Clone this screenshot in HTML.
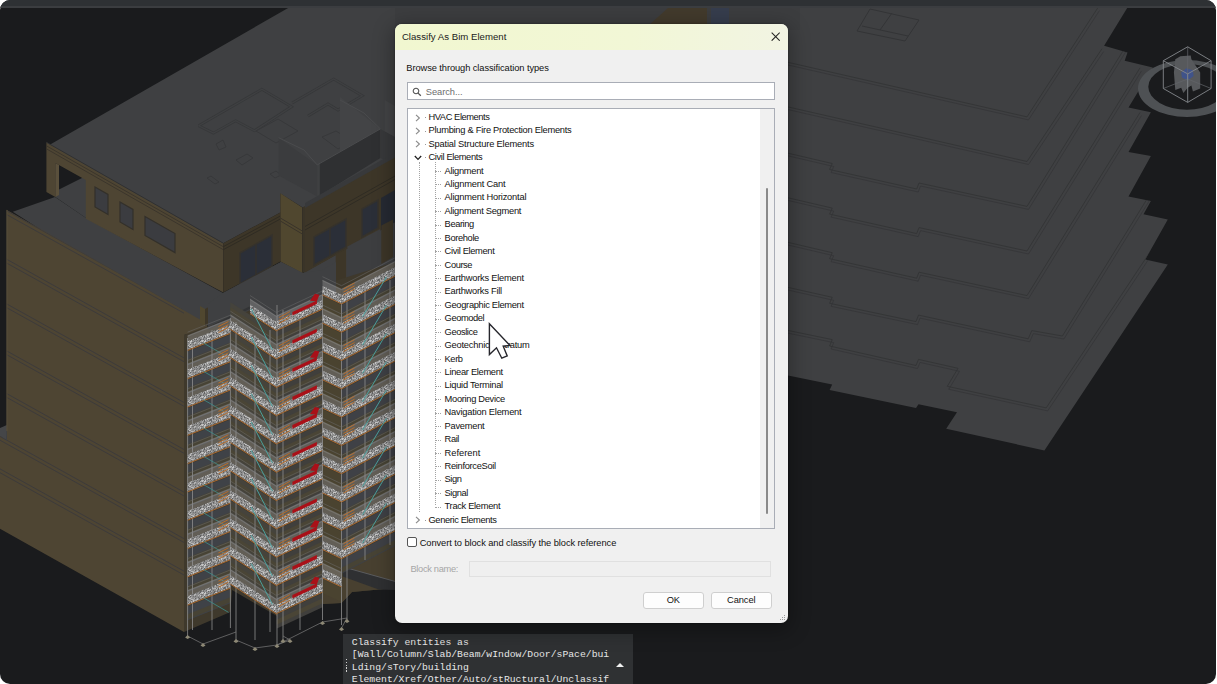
<!DOCTYPE html>
<html lang="en"><head><meta charset="utf-8"><title>Classify As Bim Element</title>
<style>
html,body{margin:0;padding:0;background:#fff;}
body{width:1217px;height:684px;overflow:hidden;position:relative;font-family:"Liberation Sans",sans-serif;}
.frame{position:absolute;left:0;top:0;width:1216px;height:684px;border-radius:10px;overflow:hidden;background:#1a1b1d;}
.topbar{position:absolute;left:0;top:0;width:100%;height:6px;background:#2e3134;border-bottom:2px solid #3b3d40;z-index:2}
svg.scene{position:absolute;left:0;top:0}
.dlg{position:absolute;left:394.5px;top:24px;width:393.5px;height:598.8px;background:#f0f0f0;border-radius:7px;overflow:hidden;box-shadow:0 5px 20px 3px rgba(0,0,0,.30),0 0 2px rgba(0,0,0,.45);color:#111;}
.ttl{position:absolute;left:0;top:0;right:0;height:25.6px;background:linear-gradient(90deg,#f1f7d0 0%,#f2f7d6 60%,#f2f4e3 100%);}
.ttl span{position:absolute;left:7.4px;top:7px;font-size:9.6px;line-height:12px;letter-spacing:0.02px;color:#1a1a1a;white-space:nowrap}
.close{position:absolute;left:376.4px;top:7.7px}
.lbl{position:absolute;left:11.8px;top:38px;font-size:9.3px;line-height:12px;white-space:nowrap;letter-spacing:-0.08px}
.search{position:absolute;left:12.8px;top:58.2px;width:367.8px;height:17.5px;background:#fff;border:1px solid #a9adb6;box-sizing:border-box}
.search span{position:absolute;left:17.5px;top:2.6px;font-size:9.3px;line-height:12px;color:#6d6d6d;letter-spacing:-0.05px}
.search svg{position:absolute;left:4px;top:3.4px}
.tree{position:absolute;left:12.8px;top:84.3px;width:368px;height:420.7px;background:#fff;border:1px solid #a9adb6;box-sizing:border-box;overflow:hidden}
.sbar{position:absolute;right:0.5px;top:0;width:13.5px;height:100%;background:#f0f0f0}
.thumb{position:absolute;left:5.9px;top:78.3px;width:1.6px;height:326px;background:#8a8a8a;border-radius:1px}
.row{position:absolute;left:0;height:13.4px;width:340px;font-size:9.3px;line-height:13.4px;white-space:nowrap;color:#111}
.cv{position:absolute;left:6.1px;top:0;width:8px;height:13.4px}
.cv svg{position:absolute;left:1px;top:3.4px}
.cv.ex svg{left:-0.5px;top:4.6px}
.dot{position:absolute;left:17px;top:7px;width:1px;height:1px;background:#9a9a9a}
.t0{position:absolute;left:20.2px;top:0.7px;letter-spacing:-0.2px}
.t1{position:absolute;left:36.3px;top:0.7px;letter-spacing:-0.13px}
.hl{position:absolute;left:27.2px;top:7px;width:6px;height:0;border-top:1px dotted #a4a4a4}
.v1{position:absolute;left:10.8px;top:52.4px;width:0;height:350px;border-left:1px dotted #a4a4a4}
.v2{position:absolute;left:26.8px;top:52.4px;width:0;height:343.5px;border-left:1px dotted #a4a4a4}
.chk{position:absolute;left:12.2px;top:513.2px;width:10.2px;height:10.2px;border:1px solid #555;border-radius:2px;box-sizing:border-box;background:#fff}
.chkl{position:absolute;left:25.2px;top:513.1px;font-size:9.3px;line-height:12px;white-space:nowrap;letter-spacing:-0.07px}
.bn{position:absolute;left:16px;top:538.6px;font-size:9.3px;line-height:12px;color:#a6a6a6;white-space:nowrap;letter-spacing:-0.33px}
.bni{position:absolute;left:74.5px;top:537px;width:302px;height:15.5px;border:1px solid #e0e0e0;box-sizing:border-box;background:#efefef}
.btn{position:absolute;top:567.5px;height:17px;width:60.5px;border:1px solid #cfcfcf;border-radius:3px;background:#fdfdfd;box-sizing:border-box;font-size:9.3px;line-height:15.5px;text-align:center;letter-spacing:-0.1px}
.ok{left:248.5px} .cancel{left:316.5px}
.grip{position:absolute;right:2px;bottom:1.6px}
.con{position:absolute;left:342.6px;top:634px;width:290px;height:50px;background:#2f3133;color:#e6e6e6;font-family:"Liberation Mono",monospace;font-size:9.76px;line-height:12.6px;white-space:pre;overflow:hidden}
.con .tx{position:absolute;left:9.2px;top:2.6px}
.con .tri{position:absolute;left:273.2px;top:28.8px}
.con .gr{position:absolute;left:3.2px;top:25px;width:1.4px;height:12.5px;background:repeating-linear-gradient(#d0d0d0 0 1.4px,transparent 1.4px 2.8px)}
.cur{position:absolute;left:0;top:0;z-index:9}
</style></head><body>
<div class="frame">
<svg class="scene" width="1216" height="684" viewBox="0 0 1216 684">
<defs>
<filter id="nz" x="0" y="0" width="100%" height="100%"><feTurbulence type="fractalNoise" baseFrequency="0.9" numOctaves="2" seed="3"/><feColorMatrix type="matrix" values="0 0 0 0 0.62  0 0 0 0 0.62  0 0 0 0 0.62  1.6 1.6 0 0 -1.1"/></filter>
<pattern id="noise" width="14" height="14" patternUnits="userSpaceOnUse"><rect width="14" height="14" fill="#8f8f8f"/><rect x="0" y="0" width="1" height="1" fill="#6c6c6c"/><rect x="1" y="0" width="1" height="1" fill="#6c6c6c"/><rect x="2" y="0" width="1" height="1" fill="#adadad"/><rect x="3" y="0" width="1" height="1" fill="#adadad"/><rect x="4" y="0" width="1" height="1" fill="#adadad"/><rect x="5" y="0" width="1" height="1" fill="#b8b8b8"/><rect x="6" y="0" width="1" height="1" fill="#6c6c6c"/><rect x="7" y="0" width="1" height="1" fill="#adadad"/><rect x="8" y="0" width="1" height="1" fill="#626262"/><rect x="9" y="0" width="1" height="1" fill="#b8b8b8"/><rect x="12" y="0" width="1" height="1" fill="#adadad"/><rect x="13" y="0" width="1" height="1" fill="#6c6c6c"/><rect x="0" y="1" width="1" height="1" fill="#b8b8b8"/><rect x="1" y="1" width="1" height="1" fill="#6c6c6c"/><rect x="6" y="1" width="1" height="1" fill="#adadad"/><rect x="8" y="1" width="1" height="1" fill="#626262"/><rect x="3" y="2" width="1" height="1" fill="#6c6c6c"/><rect x="6" y="2" width="1" height="1" fill="#adadad"/><rect x="7" y="2" width="1" height="1" fill="#767676"/><rect x="10" y="2" width="1" height="1" fill="#6c6c6c"/><rect x="11" y="2" width="1" height="1" fill="#c6c6c6"/><rect x="12" y="2" width="1" height="1" fill="#c6c6c6"/><rect x="13" y="2" width="1" height="1" fill="#c6c6c6"/><rect x="0" y="3" width="1" height="1" fill="#626262"/><rect x="1" y="3" width="1" height="1" fill="#adadad"/><rect x="4" y="3" width="1" height="1" fill="#626262"/><rect x="5" y="3" width="1" height="1" fill="#767676"/><rect x="7" y="3" width="1" height="1" fill="#6c6c6c"/><rect x="11" y="3" width="1" height="1" fill="#adadad"/><rect x="12" y="3" width="1" height="1" fill="#626262"/><rect x="1" y="4" width="1" height="1" fill="#767676"/><rect x="3" y="4" width="1" height="1" fill="#767676"/><rect x="4" y="4" width="1" height="1" fill="#626262"/><rect x="5" y="4" width="1" height="1" fill="#b8b8b8"/><rect x="6" y="4" width="1" height="1" fill="#c6c6c6"/><rect x="7" y="4" width="1" height="1" fill="#b8b8b8"/><rect x="8" y="4" width="1" height="1" fill="#767676"/><rect x="9" y="4" width="1" height="1" fill="#c6c6c6"/><rect x="10" y="4" width="1" height="1" fill="#767676"/><rect x="0" y="5" width="1" height="1" fill="#767676"/><rect x="3" y="5" width="1" height="1" fill="#6c6c6c"/><rect x="4" y="5" width="1" height="1" fill="#b8b8b8"/><rect x="5" y="5" width="1" height="1" fill="#adadad"/><rect x="6" y="5" width="1" height="1" fill="#c6c6c6"/><rect x="8" y="5" width="1" height="1" fill="#c6c6c6"/><rect x="9" y="5" width="1" height="1" fill="#c6c6c6"/><rect x="12" y="5" width="1" height="1" fill="#6c6c6c"/><rect x="3" y="6" width="1" height="1" fill="#adadad"/><rect x="5" y="6" width="1" height="1" fill="#767676"/><rect x="6" y="6" width="1" height="1" fill="#767676"/><rect x="8" y="6" width="1" height="1" fill="#b8b8b8"/><rect x="10" y="6" width="1" height="1" fill="#6c6c6c"/><rect x="11" y="6" width="1" height="1" fill="#6c6c6c"/><rect x="12" y="6" width="1" height="1" fill="#adadad"/><rect x="13" y="6" width="1" height="1" fill="#b8b8b8"/><rect x="2" y="7" width="1" height="1" fill="#b8b8b8"/><rect x="4" y="7" width="1" height="1" fill="#c6c6c6"/><rect x="8" y="7" width="1" height="1" fill="#c6c6c6"/><rect x="12" y="7" width="1" height="1" fill="#b8b8b8"/><rect x="4" y="8" width="1" height="1" fill="#adadad"/><rect x="5" y="8" width="1" height="1" fill="#626262"/><rect x="7" y="8" width="1" height="1" fill="#adadad"/><rect x="8" y="8" width="1" height="1" fill="#626262"/><rect x="11" y="8" width="1" height="1" fill="#767676"/><rect x="13" y="8" width="1" height="1" fill="#6c6c6c"/><rect x="2" y="9" width="1" height="1" fill="#6c6c6c"/><rect x="6" y="9" width="1" height="1" fill="#b8b8b8"/><rect x="9" y="9" width="1" height="1" fill="#adadad"/><rect x="1" y="10" width="1" height="1" fill="#adadad"/><rect x="3" y="10" width="1" height="1" fill="#626262"/><rect x="6" y="10" width="1" height="1" fill="#6c6c6c"/><rect x="7" y="10" width="1" height="1" fill="#c6c6c6"/><rect x="8" y="10" width="1" height="1" fill="#b8b8b8"/><rect x="12" y="10" width="1" height="1" fill="#adadad"/><rect x="13" y="10" width="1" height="1" fill="#626262"/><rect x="0" y="11" width="1" height="1" fill="#adadad"/><rect x="1" y="11" width="1" height="1" fill="#c6c6c6"/><rect x="5" y="11" width="1" height="1" fill="#adadad"/><rect x="6" y="11" width="1" height="1" fill="#626262"/><rect x="7" y="11" width="1" height="1" fill="#767676"/><rect x="9" y="11" width="1" height="1" fill="#b8b8b8"/><rect x="10" y="11" width="1" height="1" fill="#b8b8b8"/><rect x="11" y="11" width="1" height="1" fill="#adadad"/><rect x="0" y="12" width="1" height="1" fill="#adadad"/><rect x="3" y="12" width="1" height="1" fill="#626262"/><rect x="5" y="12" width="1" height="1" fill="#adadad"/><rect x="9" y="12" width="1" height="1" fill="#6c6c6c"/><rect x="11" y="12" width="1" height="1" fill="#c6c6c6"/><rect x="12" y="12" width="1" height="1" fill="#adadad"/><rect x="13" y="12" width="1" height="1" fill="#adadad"/><rect x="0" y="13" width="1" height="1" fill="#626262"/><rect x="1" y="13" width="1" height="1" fill="#6c6c6c"/><rect x="2" y="13" width="1" height="1" fill="#adadad"/><rect x="3" y="13" width="1" height="1" fill="#767676"/><rect x="9" y="13" width="1" height="1" fill="#b8b8b8"/><rect x="11" y="13" width="1" height="1" fill="#c6c6c6"/></pattern>
<clipPath id="slabclip"><polygon points="788.0,7.5 1127.5,7.5 1104.1,45.8 1127.5,52.4 1124.7,60.8 1152.8,67.4 1128.5,107.6 1150.9,112.2 1128.5,152.0 1150.9,156.1 1128.5,196.4 1150.9,201.0 1143.5,214.2 1167.8,219.6 1145.3,259.5 1167.8,264.6 1044.4,450.4 946.2,428.8 957.0,412.2 918.5,404.3 916.0,407.9 829.6,389.9 832.2,384.5 788.0,375.5 700.0,356.0 700.0,7.5"/></clipPath>
<clipPath id="faceclip"><polygon points="6.9,209.9 207.0,323.4 207.0,330.0 184.0,335.0 184.0,632.0 0.0,528.7 0.0,435.0 6.9,440.0"/></clipPath>
</defs>
<polygon points="788.0,7.5 1127.5,7.5 1104.1,45.8 1127.5,52.4 1124.7,60.8 1152.8,67.4 1128.5,107.6 1150.9,112.2 1128.5,152.0 1150.9,156.1 1128.5,196.4 1150.9,201.0 1143.5,214.2 1167.8,219.6 1145.3,259.5 1167.8,264.6 1044.4,450.4 946.2,428.8 957.0,412.2 918.5,404.3 916.0,407.9 829.6,389.9 832.2,384.5 788.0,375.5 700.0,356.0 700.0,7.5" fill="#3f4042" />
<polyline points="780.0,60.5 1027.0,116.9 1098.0,7.5" fill="none" stroke="#333436" stroke-width="0.9"  clip-path="url(#slabclip)"/>
<polyline points="781.5,63.5 1028.5,119.9 1099.5,10.5" fill="none" stroke="#333436" stroke-width="0.7"  clip-path="url(#slabclip)"/>
<polyline points="780.0,105.1 1027.0,161.5 1102.0,48.7" fill="none" stroke="#333436" stroke-width="0.9"  clip-path="url(#slabclip)"/>
<polyline points="781.5,108.1 1028.5,164.5 1103.5,51.7" fill="none" stroke="#333436" stroke-width="0.7"  clip-path="url(#slabclip)"/>
<polyline points="780.0,151.3 832.2,163.5 829.6,169.5 916.7,189.0 919.0,183.0 1027.0,206.4 1140.0,23.3" fill="none" stroke="#333436" stroke-width="0.9"  clip-path="url(#slabclip)"/>
<polyline points="781.5,154.3 833.7,166.5 831.1,172.5 918.2,192.0 920.5,186.0 1028.5,209.4 1141.5,26.3" fill="none" stroke="#333436" stroke-width="0.7"  clip-path="url(#slabclip)"/>
<polyline points="780.0,195.9 832.2,208.1 829.6,214.1 916.7,233.6 919.0,227.6 1027.0,251.0 1140.0,67.9" fill="none" stroke="#333436" stroke-width="0.9"  clip-path="url(#slabclip)"/>
<polyline points="781.5,198.9 833.7,211.1 831.1,217.1 918.2,236.6 920.5,230.6 1028.5,254.0 1141.5,70.9" fill="none" stroke="#333436" stroke-width="0.7"  clip-path="url(#slabclip)"/>
<polyline points="780.0,240.5 832.2,252.7 829.6,258.7 916.7,278.2 919.0,272.2 1027.0,295.6 1140.0,112.5" fill="none" stroke="#333436" stroke-width="0.9"  clip-path="url(#slabclip)"/>
<polyline points="781.5,243.5 833.7,255.7 831.1,261.7 918.2,281.2 920.5,275.2 1028.5,298.6 1141.5,115.5" fill="none" stroke="#333436" stroke-width="0.7"  clip-path="url(#slabclip)"/>
<polyline points="780.0,285.6 832.2,297.3 829.6,303.3 916.0,321.6 918.5,315.1 1028.2,338.8 1031.8,330.6 1062.4,336.0 1160.0,178.0" fill="none" stroke="#333436" stroke-width="0.9"  clip-path="url(#slabclip)"/>
<polyline points="781.5,288.6 833.7,300.3 831.1,306.3 917.5,324.6 920.0,318.1 1029.7,341.8 1033.3,333.6 1063.9,339.0 1161.5,181.0" fill="none" stroke="#333436" stroke-width="0.7"  clip-path="url(#slabclip)"/>
<polyline points="780.0,328.8 832.2,339.6 829.6,346.0 916.0,365.5 918.5,359.4 958.0,368.3 947.3,386.3 1046.2,407.9 1160.0,237.0" fill="none" stroke="#333436" stroke-width="0.9"  clip-path="url(#slabclip)"/>
<polyline points="781.5,331.8 833.7,342.6 831.1,349.0 917.5,368.5 920.0,362.4 959.5,371.3 948.8,389.3 1047.7,410.9 1161.5,240.0" fill="none" stroke="#333436" stroke-width="0.7"  clip-path="url(#slabclip)"/>
<polyline points="857.0,31.0 870.0,9.0 919.0,20.0 905.0,41.0 857.0,31.0" fill="none" stroke="#333436" stroke-width="1" />
<polyline points="862.0,26.0 908.0,36.0" fill="none" stroke="#333436" stroke-width="1" />
<polyline points="880.0,30.0 892.0,13.0" fill="none" stroke="#333436" stroke-width="1" />
<polygon points="289.0,7.5 48.0,145.7 223.3,243.2 280.4,212.5 280.4,193.5 303.5,208.0 420.0,143.0 420.0,7.5" fill="#3f4042" />
<polygon points="395.0,7.5 800.0,7.5 800.0,30.0 395.0,30.0" fill="#3c3d3f" />
<polygon points="648.0,26.0 668.0,8.0 707.0,8.0 707.0,26.0" fill="#423a2c" />
<polygon points="711.0,8.0 729.0,8.0 729.0,26.0 711.0,26.0" fill="#363d4d" />
<polyline points="198.6,125.7 261.9,89.3 291.5,106.8 254.5,130.7 235.6,120.8 213.4,133.1 198.6,125.7" fill="none" stroke="#37383a" stroke-width="2.8" />
<polyline points="198.6,125.7 261.9,89.3 291.5,106.8 254.5,130.7 235.6,120.8 213.4,133.1 198.6,125.7" fill="none" stroke="#3f4042" stroke-width="1.2" />
<polyline points="292.2,103.0 333.7,79.0 362.3,95.7 338.0,110.0 328.0,104.0 308.0,116.0" fill="none" stroke="#37383a" stroke-width="2.8" />
<polyline points="292.2,103.0 333.7,79.0 362.3,95.7 338.0,110.0 328.0,104.0 308.0,116.0" fill="none" stroke="#3f4042" stroke-width="1.2" />
<polyline points="256.0,131.0 278.0,119.0 298.0,131.0 276.0,143.0 256.0,131.0" fill="none" stroke="#37383a" stroke-width="1" />
<polyline points="322.0,137.0 336.0,131.0 352.0,141.0 338.0,149.0 322.0,137.0" fill="none" stroke="#37383a" stroke-width="1" />
<polyline points="216.0,144.0 223.0,140.0 226.0,147.0 219.0,150.0 216.0,144.0" fill="none" stroke="#37383a" stroke-width="1" />
<polyline points="236.0,160.0 247.0,154.0 253.0,158.0 242.0,165.0 236.0,160.0" fill="none" stroke="#37383a" stroke-width="1" />
<polyline points="207.0,178.0 211.0,176.0 219.0,182.0 215.0,184.0 207.0,178.0" fill="none" stroke="#37383a" stroke-width="1" />
<polyline points="270.0,174.0 276.0,171.0 281.0,175.0 275.0,178.0 270.0,174.0" fill="none" stroke="#37383a" stroke-width="1" />
<polygon points="340.0,97.0 380.4,128.9 340.0,151.8" fill="#434446" />
<polygon points="384.7,100.0 395.0,106.0 395.0,140.0 384.7,132.0" fill="#444547" />
<polygon points="278.6,137.7 317.2,164.9 317.2,196.5 278.6,175.4" fill="#3b3c3e" />
<polygon points="319.8,163.2 380.4,128.9 380.4,157.9 319.8,195.6" fill="#2f3032" />
<polygon points="380.4,128.9 395.0,137.0 395.0,165.0 380.4,157.9" fill="#38393b" />
<polyline points="278.6,137.7 304.0,150.0 317.2,164.9 380.4,128.9 364.0,113.0 340.0,100.0" fill="none" stroke="#4a4b4d" stroke-width="1" />
<polygon points="12.8,211.8 55.0,197.0 86.0,218.0 223.0,293.0 281.0,262.0 303.0,273.0 395.0,222.0 395.0,300.0 330.0,300.0 210.0,326.0 183.0,321.0" fill="#3f4042" />
<polygon points="55.3,163.0 86.0,181.0 86.0,205.0 55.3,197.0" fill="#1a1b1d" />
<polygon points="58.0,190.0 86.0,176.0 86.0,218.0 55.3,197.0" fill="#3f4042" />
<polygon points="46.4,142.3 223.3,243.2 223.3,292.5 85.8,218.8 85.8,180.0 55.3,163.0 55.3,197.0 46.4,192.0" fill="#4e4533" />
<polygon points="55.3,163.0 59.0,165.0 59.0,195.0 55.3,197.0" fill="#5a503c" />
<polyline points="46.4,145.8 223.3,246.7" fill="none" stroke="#39332a" stroke-width="0.9" />
<polyline points="46.4,148.8 223.3,249.7" fill="none" stroke="#39332a" stroke-width="0.9" />
<polyline points="46.4,142.3 223.3,243.2" fill="none" stroke="#2f3032" stroke-width="1" />
<polygon points="95.0,187.0 108.0,194.4 108.0,214.4 95.0,207.0" fill="#3b3c40" stroke="#33302a" stroke-width="1.2"/>
<polygon points="120.0,202.0 133.0,209.4 133.0,229.4 120.0,222.0" fill="#3b3c40" stroke="#33302a" stroke-width="1.2"/>
<polygon points="145.0,216.5 175.0,233.6 175.0,252.6 145.0,235.5" fill="#3b3c40" stroke="#33302a" stroke-width="1.2"/>
<polygon points="223.3,243.2 280.4,212.5 280.4,261.6 223.3,292.5" fill="#3d3628" />
<polyline points="223.3,246.7 280.4,216.0" fill="none" stroke="#2e2a22" stroke-width="0.9" />
<polyline points="223.3,249.7 280.4,219.0" fill="none" stroke="#2e2a22" stroke-width="0.9" />
<polygon points="240.0,253.0 272.0,235.0 272.0,266.0 240.0,284.0" fill="#2b2f38" stroke="#35322c" stroke-width="1.5"/>
<polyline points="256.0,244.0 256.0,275.0" fill="none" stroke="#35322c" stroke-width="1.5" />
<polygon points="280.4,193.2 302.3,207.5 302.3,273.0 280.4,261.6" fill="#50472f" />
<polyline points="280.4,218.0 302.3,231.0" fill="none" stroke="#39332a" stroke-width="1" />
<polyline points="280.4,221.0 302.3,234.0" fill="none" stroke="#39332a" stroke-width="1" />
<polygon points="302.3,207.5 305.0,206.0 305.0,272.0 302.3,273.0" fill="#3a3428" />
<polygon points="305.0,207.0 395.0,156.5 395.0,222.0 305.0,272.5" fill="#3d3628" />
<polyline points="305.0,226.5 395.0,176.0" fill="none" stroke="#2e2a22" stroke-width="0.9" />
<polyline points="305.0,230.0 395.0,179.5" fill="none" stroke="#2e2a22" stroke-width="0.9" />
<polygon points="305.0,203.0 395.0,152.5 395.0,157.5 305.0,208.0" fill="#38393b" />
<polygon points="314.0,237.0 346.0,219.0 346.0,247.0 314.0,265.0" fill="#2b2f38" stroke="#35322c" stroke-width="1.5"/>
<polyline points="330.0,228.0 330.0,256.0" fill="none" stroke="#35322c" stroke-width="1.5" />
<polygon points="362.0,209.0 378.0,200.0 378.0,228.0 362.0,237.0" fill="#2b2f38" stroke="#35322c" stroke-width="1.5"/>
<polygon points="381.0,198.0 395.0,190.0 395.0,222.0 381.0,230.0" fill="#262a33" />
<polygon points="335.7,254.8 346.2,248.9 346.2,284.0 335.7,289.9" fill="#3d3628" />
<polygon points="381.3,225.5 393.0,219.6 393.0,257.0 381.3,264.1" fill="#3d3628" />
<polygon points="347.4,246.6 380.2,229.0 380.2,266.5 347.4,282.9" fill="#3d3e40" />
<polygon points="6.9,209.9 207.0,323.4 207.0,330.0 184.0,335.0 184.0,632.0 0.0,528.7 0.0,435.0 6.9,440.0" fill="#4e4533" />
<polygon points="0.0,428.0 6.9,425.0 6.9,441.0 0.0,436.0" fill="#454648" />
<polyline points="6.9,210.9 184.0,309.4" fill="none" stroke="#3b3a3c" stroke-width="0.9" clip-path="url(#faceclip)"/>
<polyline points="6.9,214.7 184.0,313.2" fill="none" stroke="#3b3a3c" stroke-width="0.9" clip-path="url(#faceclip)"/>
<polyline points="6.9,259.4 184.0,357.9" fill="none" stroke="#3b3a3c" stroke-width="0.9" clip-path="url(#faceclip)"/>
<polyline points="6.9,263.2 184.0,361.7" fill="none" stroke="#3b3a3c" stroke-width="0.9" clip-path="url(#faceclip)"/>
<polyline points="6.9,304.0 184.0,402.5" fill="none" stroke="#3b3a3c" stroke-width="0.9" clip-path="url(#faceclip)"/>
<polyline points="6.9,307.8 184.0,406.3" fill="none" stroke="#3b3a3c" stroke-width="0.9" clip-path="url(#faceclip)"/>
<polyline points="6.9,351.0 184.0,449.5" fill="none" stroke="#3b3a3c" stroke-width="0.9" clip-path="url(#faceclip)"/>
<polyline points="6.9,354.8 184.0,453.3" fill="none" stroke="#3b3a3c" stroke-width="0.9" clip-path="url(#faceclip)"/>
<polyline points="6.9,393.7 184.0,492.2" fill="none" stroke="#3b3a3c" stroke-width="0.9" clip-path="url(#faceclip)"/>
<polyline points="6.9,397.5 184.0,496.0" fill="none" stroke="#3b3a3c" stroke-width="0.9" clip-path="url(#faceclip)"/>
<polyline points="0.0,436.4 184.0,538.7" fill="none" stroke="#3b3a3c" stroke-width="0.9" clip-path="url(#faceclip)"/>
<polyline points="0.0,440.2 184.0,542.5" fill="none" stroke="#3b3a3c" stroke-width="0.9" clip-path="url(#faceclip)"/>
<polyline points="0.0,468.9 184.0,571.2" fill="none" stroke="#3b3a3c" stroke-width="0.9" clip-path="url(#faceclip)"/>
<polyline points="0.0,472.7 184.0,575.0" fill="none" stroke="#3b3a3c" stroke-width="0.9" clip-path="url(#faceclip)"/>
<polyline points="6.9,209.9 6.9,431.0" fill="none" stroke="#5a503c" stroke-width="1" />
<polygon points="200.0,306.0 205.0,309.0 205.0,326.0 200.0,323.0" fill="#50472f" />
<polygon points="205.0,309.0 214.0,304.0 214.0,321.0 205.0,326.0" fill="#3d3628" />
<polygon points="184.0,335.0 230.0,318.0 277.0,300.0 322.0,285.0 395.0,262.0 395.0,588.0 352.0,592.0 341.5,603.0 322.5,604.0 285.0,622.0 276.9,616.0 232.0,590.0 230.4,612.0 184.0,632.0" fill="#3f392c" />
<polygon points="208.0,327.0 250.0,306.0 277.0,322.0 322.5,301.0 336.0,298.0 336.0,262.0 322.5,270.0 303.0,273.0 281.0,262.0 223.0,293.0 208.0,304.0" fill="#3f4042" />
<polyline points="208.0,328.5 250.0,307.5" fill="none" stroke="#333436" stroke-width="2.5" />
<polygon points="323.0,560.0 395.0,540.0 395.0,588.0 352.0,592.0 341.5,603.0 323.0,604.0" fill="#484030" />
<polygon points="342.7,566.8 395.0,581.4 395.0,590.0 378.6,589.5 342.7,576.4" fill="#2f3032" />
<polyline points="342.7,566.8 395.0,581.4" fill="none" stroke="#5a5b5e" stroke-width="1" />
<polygon points="187.6,351.5 230.4,334.5 230.4,348.5 187.6,365.5" fill="#3f4247" />
<polygon points="187.6,359.5 230.4,342.5 230.4,347.5 187.6,364.5" fill="#474335" />
<polygon points="187.6,379.8 230.4,362.8 230.4,376.8 187.6,393.8" fill="#3f4247" />
<polygon points="187.6,387.8 230.4,370.8 230.4,375.8 187.6,392.8" fill="#474335" />
<polygon points="187.6,408.1 230.4,391.1 230.4,405.1 187.6,422.1" fill="#3f4247" />
<polygon points="187.6,416.1 230.4,399.1 230.4,404.1 187.6,421.1" fill="#474335" />
<polygon points="187.6,436.4 230.4,419.4 230.4,433.4 187.6,450.4" fill="#3f4247" />
<polygon points="187.6,444.4 230.4,427.4 230.4,432.4 187.6,449.4" fill="#474335" />
<polygon points="187.6,464.7 230.4,447.7 230.4,461.7 187.6,478.7" fill="#3f4247" />
<polygon points="187.6,472.7 230.4,455.7 230.4,460.7 187.6,477.7" fill="#474335" />
<polygon points="187.6,493.0 230.4,476.0 230.4,490.0 187.6,507.0" fill="#3f4247" />
<polygon points="187.6,501.0 230.4,484.0 230.4,489.0 187.6,506.0" fill="#474335" />
<polygon points="187.6,521.3 230.4,504.3 230.4,518.3 187.6,535.3" fill="#3f4247" />
<polygon points="187.6,529.3 230.4,512.3 230.4,517.3 187.6,534.3" fill="#474335" />
<polygon points="187.6,549.6 230.4,532.6 230.4,546.6 187.6,563.6" fill="#3f4247" />
<polygon points="187.6,557.6 230.4,540.6 230.4,545.6 187.6,562.6" fill="#474335" />
<polygon points="187.6,577.9 230.4,560.9 230.4,574.9 187.6,591.9" fill="#3f4247" />
<polygon points="187.6,585.9 230.4,568.9 230.4,573.9 187.6,590.9" fill="#474335" />
<polygon points="187.6,606.2 230.4,589.2 230.4,603.2 187.6,620.2" fill="#3f4247" />
<polygon points="187.6,614.2 230.4,597.2 230.4,602.2 187.6,619.2" fill="#474335" />
<polygon points="230.4,302.2 276.9,332.2 276.9,346.2 230.4,316.2" fill="#45433c" />
<polygon points="230.4,307.2 276.9,337.2 276.9,342.2 230.4,312.2" fill="#4a4536" />
<polygon points="230.4,330.5 276.9,360.5 276.9,374.5 230.4,344.5" fill="#45433c" />
<polygon points="230.4,335.5 276.9,365.5 276.9,370.5 230.4,340.5" fill="#4a4536" />
<polygon points="230.4,358.8 276.9,388.8 276.9,402.8 230.4,372.8" fill="#45433c" />
<polygon points="230.4,363.8 276.9,393.8 276.9,398.8 230.4,368.8" fill="#4a4536" />
<polygon points="230.4,387.1 276.9,417.1 276.9,431.1 230.4,401.1" fill="#45433c" />
<polygon points="230.4,392.1 276.9,422.1 276.9,427.1 230.4,397.1" fill="#4a4536" />
<polygon points="230.4,415.4 276.9,445.4 276.9,459.4 230.4,429.4" fill="#45433c" />
<polygon points="230.4,420.4 276.9,450.4 276.9,455.4 230.4,425.4" fill="#4a4536" />
<polygon points="230.4,443.7 276.9,473.7 276.9,487.7 230.4,457.7" fill="#45433c" />
<polygon points="230.4,448.7 276.9,478.7 276.9,483.7 230.4,453.7" fill="#4a4536" />
<polygon points="230.4,472.0 276.9,502.0 276.9,516.0 230.4,486.0" fill="#45433c" />
<polygon points="230.4,477.0 276.9,507.0 276.9,512.0 230.4,482.0" fill="#4a4536" />
<polygon points="230.4,500.3 276.9,530.3 276.9,544.3 230.4,514.3" fill="#45433c" />
<polygon points="230.4,505.3 276.9,535.3 276.9,540.3 230.4,510.3" fill="#4a4536" />
<polygon points="230.4,528.6 276.9,558.6 276.9,572.6 230.4,542.6" fill="#45433c" />
<polygon points="230.4,533.6 276.9,563.6 276.9,568.6 230.4,538.6" fill="#4a4536" />
<polygon points="230.4,556.9 276.9,586.9 276.9,600.9 230.4,570.9" fill="#45433c" />
<polygon points="230.4,561.9 276.9,591.9 276.9,596.9 230.4,566.9" fill="#4a4536" />
<polygon points="276.9,331.5 322.5,310.2 322.5,324.2 276.9,345.5" fill="#403f3c" />
<polygon points="276.9,336.5 322.5,315.2 322.5,320.2 276.9,341.5" fill="#4a4536" />
<polygon points="276.9,359.8 322.5,338.5 322.5,352.5 276.9,373.8" fill="#403f3c" />
<polygon points="276.9,364.8 322.5,343.5 322.5,348.5 276.9,369.8" fill="#4a4536" />
<polygon points="276.9,388.1 322.5,366.8 322.5,380.8 276.9,402.1" fill="#403f3c" />
<polygon points="276.9,393.1 322.5,371.8 322.5,376.8 276.9,398.1" fill="#4a4536" />
<polygon points="276.9,416.4 322.5,395.1 322.5,409.1 276.9,430.4" fill="#403f3c" />
<polygon points="276.9,421.4 322.5,400.1 322.5,405.1 276.9,426.4" fill="#4a4536" />
<polygon points="276.9,444.7 322.5,423.4 322.5,437.4 276.9,458.7" fill="#403f3c" />
<polygon points="276.9,449.7 322.5,428.4 322.5,433.4 276.9,454.7" fill="#4a4536" />
<polygon points="276.9,473.0 322.5,451.7 322.5,465.7 276.9,487.0" fill="#403f3c" />
<polygon points="276.9,478.0 322.5,456.7 322.5,461.7 276.9,483.0" fill="#4a4536" />
<polygon points="276.9,501.3 322.5,480.0 322.5,494.0 276.9,515.3" fill="#403f3c" />
<polygon points="276.9,506.3 322.5,485.0 322.5,490.0 276.9,511.3" fill="#4a4536" />
<polygon points="276.9,529.6 322.5,508.3 322.5,522.3 276.9,543.6" fill="#403f3c" />
<polygon points="276.9,534.6 322.5,513.3 322.5,518.3 276.9,539.6" fill="#4a4536" />
<polygon points="276.9,557.9 322.5,536.6 322.5,550.6 276.9,571.9" fill="#403f3c" />
<polygon points="276.9,562.9 322.5,541.6 322.5,546.6 276.9,567.9" fill="#4a4536" />
<polygon points="276.9,586.2 322.5,564.9 322.5,578.9 276.9,600.2" fill="#403f3c" />
<polygon points="276.9,591.2 322.5,569.9 322.5,574.9 276.9,596.2" fill="#4a4536" />
<polygon points="276.9,614.5 322.5,593.2 322.5,607.2 276.9,628.5" fill="#403f3c" />
<polygon points="276.9,619.5 322.5,598.2 322.5,603.2 276.9,624.5" fill="#4a4536" />
<polygon points="322.5,296.0 341.5,305.0 341.5,319.0 322.5,310.0" fill="#4a4330" />
<polygon points="322.5,324.3 341.5,333.3 341.5,347.3 322.5,338.3" fill="#4a4330" />
<polygon points="322.5,352.6 341.5,361.6 341.5,375.6 322.5,366.6" fill="#4a4330" />
<polygon points="322.5,380.9 341.5,389.9 341.5,403.9 322.5,394.9" fill="#4a4330" />
<polygon points="322.5,409.2 341.5,418.2 341.5,432.2 322.5,423.2" fill="#4a4330" />
<polygon points="322.5,437.5 341.5,446.5 341.5,460.5 322.5,451.5" fill="#4a4330" />
<polygon points="322.5,465.8 341.5,474.8 341.5,488.8 322.5,479.8" fill="#4a4330" />
<polygon points="322.5,494.1 341.5,503.1 341.5,517.1 322.5,508.1" fill="#4a4330" />
<polygon points="322.5,522.4 341.5,531.4 341.5,545.4 322.5,536.4" fill="#4a4330" />
<polygon points="322.5,550.7 341.5,559.7 341.5,573.7 322.5,564.7" fill="#4a4330" />
<polygon points="322.5,579.0 341.5,588.0 341.5,602.0 322.5,593.0" fill="#4a4330" />
<polygon points="341.5,305.0 395.0,277.2 395.0,291.2 341.5,319.0" fill="#3f4146" />
<polygon points="341.5,313.0 395.0,285.2 395.0,290.2 341.5,318.0" fill="#474335" />
<polygon points="341.5,333.3 395.0,305.5 395.0,319.5 341.5,347.3" fill="#3f4146" />
<polygon points="341.5,341.3 395.0,313.5 395.0,318.5 341.5,346.3" fill="#474335" />
<polygon points="341.5,361.6 395.0,333.8 395.0,347.8 341.5,375.6" fill="#3f4146" />
<polygon points="341.5,369.6 395.0,341.8 395.0,346.8 341.5,374.6" fill="#474335" />
<polygon points="341.5,389.9 395.0,362.1 395.0,376.1 341.5,403.9" fill="#3f4146" />
<polygon points="341.5,397.9 395.0,370.1 395.0,375.1 341.5,402.9" fill="#474335" />
<polygon points="341.5,418.2 395.0,390.4 395.0,404.4 341.5,432.2" fill="#3f4146" />
<polygon points="341.5,426.2 395.0,398.4 395.0,403.4 341.5,431.2" fill="#474335" />
<polygon points="341.5,446.5 395.0,418.7 395.0,432.7 341.5,460.5" fill="#3f4146" />
<polygon points="341.5,454.5 395.0,426.7 395.0,431.7 341.5,459.5" fill="#474335" />
<polygon points="341.5,474.8 395.0,447.0 395.0,461.0 341.5,488.8" fill="#3f4146" />
<polygon points="341.5,482.8 395.0,455.0 395.0,460.0 341.5,487.8" fill="#474335" />
<polygon points="341.5,503.1 395.0,475.3 395.0,489.3 341.5,517.1" fill="#3f4146" />
<polygon points="341.5,511.1 395.0,483.3 395.0,488.3 341.5,516.1" fill="#474335" />
<polygon points="341.5,531.4 395.0,503.6 395.0,517.6 341.5,545.4" fill="#3f4146" />
<polygon points="341.5,539.4 395.0,511.6 395.0,516.6 341.5,544.4" fill="#474335" />
<polygon points="341.5,559.7 395.0,531.9 395.0,545.9 341.5,573.7" fill="#3f4146" />
<polygon points="341.5,567.7 395.0,539.9 395.0,544.9 341.5,572.7" fill="#474335" />
<polyline points="187.6,338.0 187.6,636.0" fill="none" stroke="#8d8d8d" stroke-width="0.8" />
<polyline points="192.5,340.0 192.5,630.0" fill="none" stroke="#8d8d8d" stroke-width="0.8" />
<polyline points="230.4,318.0 230.4,628.0" fill="none" stroke="#8d8d8d" stroke-width="0.8" />
<polyline points="236.0,322.0 236.0,640.0" fill="none" stroke="#8d8d8d" stroke-width="0.8" />
<polyline points="277.0,305.0 277.0,645.0" fill="none" stroke="#8d8d8d" stroke-width="0.8" />
<polyline points="283.0,310.0 283.0,640.0" fill="none" stroke="#8d8d8d" stroke-width="0.8" />
<polyline points="322.5,290.0 322.5,620.0" fill="none" stroke="#8d8d8d" stroke-width="0.8" />
<polyline points="341.5,300.0 341.5,625.0" fill="none" stroke="#8d8d8d" stroke-width="0.8" />
<polyline points="347.0,300.0 347.0,620.0" fill="none" stroke="#8d8d8d" stroke-width="0.8" />
<polyline points="270.0,330.0 270.0,632.0" fill="none" stroke="#8d8d8d" stroke-width="0.8" />
<polyline points="212.0,330.0 212.0,630.0" fill="none" stroke="#8d8d8d" stroke-width="0.8" />
<polyline points="255.0,335.0 255.0,640.0" fill="none" stroke="#8d8d8d" stroke-width="0.8" />
<polyline points="300.0,310.0 300.0,630.0" fill="none" stroke="#8d8d8d" stroke-width="0.8" />
<polyline points="365.0,290.0 365.0,560.0" fill="none" stroke="#8d8d8d" stroke-width="0.8" />
<polyline points="390.0,280.0 390.0,545.0" fill="none" stroke="#8d8d8d" stroke-width="0.8" />
<polygon points="187.6,335.2 230.4,318.2 230.4,324.2 187.6,341.2" fill="#9a9a9a" fill-opacity="0.38"/>
<polygon points="187.6,341.2 230.4,324.2 230.4,332.8 187.6,349.8" fill="url(#noise)" />
<polyline points="187.6,350.4 230.4,333.4" fill="none" stroke="#a86a34" stroke-width="1.0" />
<polyline points="187.6,336.2 230.4,319.2" fill="none" stroke="#7d7d7d" stroke-width="0.6" />
<polyline points="187.6,332.2 230.4,315.2" fill="none" stroke="#6d6d6d" stroke-width="0.5" />
<polyline points="218.4,326.5 228.4,321.5" fill="none" stroke="#b46c2c" stroke-width="1.0" />
<polyline points="218.4,329.5 228.4,324.5" fill="none" stroke="#b46c2c" stroke-width="1.0" />
<polyline points="218.4,332.5 228.4,327.5" fill="none" stroke="#b46c2c" stroke-width="1.0" />
<polyline points="203.6,343.1 228.6,357.7" fill="none" stroke="#3d8f8c" stroke-width="0.8" />
<polygon points="187.6,363.5 230.4,346.5 230.4,352.5 187.6,369.5" fill="#9a9a9a" fill-opacity="0.38"/>
<polygon points="187.6,369.5 230.4,352.5 230.4,361.1 187.6,378.1" fill="url(#noise)" />
<polyline points="187.6,378.7 230.4,361.7" fill="none" stroke="#a86a34" stroke-width="1.0" />
<polyline points="187.6,364.5 230.4,347.5" fill="none" stroke="#7d7d7d" stroke-width="0.6" />
<polyline points="187.6,360.5 230.4,343.5" fill="none" stroke="#6d6d6d" stroke-width="0.5" />
<polyline points="218.4,354.8 228.4,349.8" fill="none" stroke="#b46c2c" stroke-width="1.0" />
<polyline points="218.4,357.8 228.4,352.8" fill="none" stroke="#b46c2c" stroke-width="1.0" />
<polyline points="218.4,360.8 228.4,355.8" fill="none" stroke="#b46c2c" stroke-width="1.0" />
<polyline points="203.6,371.4 228.6,386.0" fill="none" stroke="#3d8f8c" stroke-width="0.8" />
<polygon points="187.6,391.8 230.4,374.8 230.4,380.8 187.6,397.8" fill="#9a9a9a" fill-opacity="0.38"/>
<polygon points="187.6,397.8 230.4,380.8 230.4,389.4 187.6,406.4" fill="url(#noise)" />
<polyline points="187.6,407.0 230.4,390.0" fill="none" stroke="#a86a34" stroke-width="1.0" />
<polyline points="187.6,392.8 230.4,375.8" fill="none" stroke="#7d7d7d" stroke-width="0.6" />
<polyline points="187.6,388.8 230.4,371.8" fill="none" stroke="#6d6d6d" stroke-width="0.5" />
<polyline points="218.4,383.1 228.4,378.1" fill="none" stroke="#b46c2c" stroke-width="1.0" />
<polyline points="218.4,386.1 228.4,381.1" fill="none" stroke="#b46c2c" stroke-width="1.0" />
<polyline points="218.4,389.1 228.4,384.1" fill="none" stroke="#b46c2c" stroke-width="1.0" />
<polyline points="203.6,399.7 228.6,414.3" fill="none" stroke="#3d8f8c" stroke-width="0.8" />
<polygon points="187.6,420.1 230.4,403.1 230.4,409.1 187.6,426.1" fill="#9a9a9a" fill-opacity="0.38"/>
<polygon points="187.6,426.1 230.4,409.1 230.4,417.7 187.6,434.7" fill="url(#noise)" />
<polyline points="187.6,435.3 230.4,418.3" fill="none" stroke="#a86a34" stroke-width="1.0" />
<polyline points="187.6,421.1 230.4,404.1" fill="none" stroke="#7d7d7d" stroke-width="0.6" />
<polyline points="187.6,417.1 230.4,400.1" fill="none" stroke="#6d6d6d" stroke-width="0.5" />
<polyline points="218.4,411.4 228.4,406.4" fill="none" stroke="#b46c2c" stroke-width="1.0" />
<polyline points="218.4,414.4 228.4,409.4" fill="none" stroke="#b46c2c" stroke-width="1.0" />
<polyline points="218.4,417.4 228.4,412.4" fill="none" stroke="#b46c2c" stroke-width="1.0" />
<polyline points="203.6,428.0 228.6,442.6" fill="none" stroke="#3d8f8c" stroke-width="0.8" />
<polygon points="187.6,448.4 230.4,431.4 230.4,437.4 187.6,454.4" fill="#9a9a9a" fill-opacity="0.38"/>
<polygon points="187.6,454.4 230.4,437.4 230.4,446.0 187.6,463.0" fill="url(#noise)" />
<polyline points="187.6,463.6 230.4,446.6" fill="none" stroke="#a86a34" stroke-width="1.0" />
<polyline points="187.6,449.4 230.4,432.4" fill="none" stroke="#7d7d7d" stroke-width="0.6" />
<polyline points="187.6,445.4 230.4,428.4" fill="none" stroke="#6d6d6d" stroke-width="0.5" />
<polyline points="218.4,439.7 228.4,434.7" fill="none" stroke="#b46c2c" stroke-width="1.0" />
<polyline points="218.4,442.7 228.4,437.7" fill="none" stroke="#b46c2c" stroke-width="1.0" />
<polyline points="218.4,445.7 228.4,440.7" fill="none" stroke="#b46c2c" stroke-width="1.0" />
<polyline points="203.6,456.3 228.6,470.9" fill="none" stroke="#3d8f8c" stroke-width="0.8" />
<polygon points="187.6,476.7 230.4,459.7 230.4,465.7 187.6,482.7" fill="#9a9a9a" fill-opacity="0.38"/>
<polygon points="187.6,482.7 230.4,465.7 230.4,474.3 187.6,491.3" fill="url(#noise)" />
<polyline points="187.6,491.9 230.4,474.9" fill="none" stroke="#a86a34" stroke-width="1.0" />
<polyline points="187.6,477.7 230.4,460.7" fill="none" stroke="#7d7d7d" stroke-width="0.6" />
<polyline points="187.6,473.7 230.4,456.7" fill="none" stroke="#6d6d6d" stroke-width="0.5" />
<polyline points="218.4,468.0 228.4,463.0" fill="none" stroke="#b46c2c" stroke-width="1.0" />
<polyline points="218.4,471.0 228.4,466.0" fill="none" stroke="#b46c2c" stroke-width="1.0" />
<polyline points="218.4,474.0 228.4,469.0" fill="none" stroke="#b46c2c" stroke-width="1.0" />
<polyline points="203.6,484.6 228.6,499.2" fill="none" stroke="#3d8f8c" stroke-width="0.8" />
<polygon points="187.6,505.0 230.4,488.0 230.4,494.0 187.6,511.0" fill="#9a9a9a" fill-opacity="0.38"/>
<polygon points="187.6,511.0 230.4,494.0 230.4,502.6 187.6,519.6" fill="url(#noise)" />
<polyline points="187.6,520.2 230.4,503.2" fill="none" stroke="#a86a34" stroke-width="1.0" />
<polyline points="187.6,506.0 230.4,489.0" fill="none" stroke="#7d7d7d" stroke-width="0.6" />
<polyline points="187.6,502.0 230.4,485.0" fill="none" stroke="#6d6d6d" stroke-width="0.5" />
<polyline points="218.4,496.3 228.4,491.3" fill="none" stroke="#b46c2c" stroke-width="1.0" />
<polyline points="218.4,499.3 228.4,494.3" fill="none" stroke="#b46c2c" stroke-width="1.0" />
<polyline points="218.4,502.3 228.4,497.3" fill="none" stroke="#b46c2c" stroke-width="1.0" />
<polyline points="203.6,512.9 228.6,527.5" fill="none" stroke="#3d8f8c" stroke-width="0.8" />
<polygon points="187.6,533.3 230.4,516.3 230.4,522.3 187.6,539.3" fill="#9a9a9a" fill-opacity="0.38"/>
<polygon points="187.6,539.3 230.4,522.3 230.4,530.9 187.6,547.9" fill="url(#noise)" />
<polyline points="187.6,548.5 230.4,531.5" fill="none" stroke="#a86a34" stroke-width="1.0" />
<polyline points="187.6,534.3 230.4,517.3" fill="none" stroke="#7d7d7d" stroke-width="0.6" />
<polyline points="187.6,530.3 230.4,513.3" fill="none" stroke="#6d6d6d" stroke-width="0.5" />
<polyline points="218.4,524.6 228.4,519.6" fill="none" stroke="#b46c2c" stroke-width="1.0" />
<polyline points="218.4,527.6 228.4,522.6" fill="none" stroke="#b46c2c" stroke-width="1.0" />
<polyline points="218.4,530.6 228.4,525.6" fill="none" stroke="#b46c2c" stroke-width="1.0" />
<polyline points="203.6,541.2 228.6,555.8" fill="none" stroke="#3d8f8c" stroke-width="0.8" />
<polygon points="187.6,561.6 230.4,544.6 230.4,550.6 187.6,567.6" fill="#9a9a9a" fill-opacity="0.38"/>
<polygon points="187.6,567.6 230.4,550.6 230.4,559.2 187.6,576.2" fill="url(#noise)" />
<polyline points="187.6,576.8 230.4,559.8" fill="none" stroke="#a86a34" stroke-width="1.0" />
<polyline points="187.6,562.6 230.4,545.6" fill="none" stroke="#7d7d7d" stroke-width="0.6" />
<polyline points="187.6,558.6 230.4,541.6" fill="none" stroke="#6d6d6d" stroke-width="0.5" />
<polyline points="218.4,552.9 228.4,547.9" fill="none" stroke="#b46c2c" stroke-width="1.0" />
<polyline points="218.4,555.9 228.4,550.9" fill="none" stroke="#b46c2c" stroke-width="1.0" />
<polyline points="218.4,558.9 228.4,553.9" fill="none" stroke="#b46c2c" stroke-width="1.0" />
<polyline points="203.6,569.5 228.6,584.1" fill="none" stroke="#3d8f8c" stroke-width="0.8" />
<polygon points="187.6,589.9 230.4,572.9 230.4,578.9 187.6,595.9" fill="#9a9a9a" fill-opacity="0.38"/>
<polygon points="187.6,595.9 230.4,578.9 230.4,587.5 187.6,604.5" fill="url(#noise)" />
<polyline points="187.6,605.1 230.4,588.1" fill="none" stroke="#a86a34" stroke-width="1.0" />
<polyline points="187.6,590.9 230.4,573.9" fill="none" stroke="#7d7d7d" stroke-width="0.6" />
<polyline points="187.6,586.9 230.4,569.9" fill="none" stroke="#6d6d6d" stroke-width="0.5" />
<polyline points="218.4,581.2 228.4,576.2" fill="none" stroke="#b46c2c" stroke-width="1.0" />
<polyline points="218.4,584.2 228.4,579.2" fill="none" stroke="#b46c2c" stroke-width="1.0" />
<polyline points="218.4,587.2 228.4,582.2" fill="none" stroke="#b46c2c" stroke-width="1.0" />
<polyline points="203.6,597.8 228.6,612.4" fill="none" stroke="#3d8f8c" stroke-width="0.8" />
<polygon points="250.0,298.5 276.9,315.9 276.9,321.9 250.0,304.5" fill="#9a9a9a" fill-opacity="0.38"/>
<polygon points="250.0,304.5 276.9,321.9 276.9,330.5 250.0,313.1" fill="url(#noise)" />
<polyline points="250.0,313.7 276.9,331.1" fill="none" stroke="#a86a34" stroke-width="1.0" />
<polyline points="250.0,299.5 276.9,316.9" fill="none" stroke="#7d7d7d" stroke-width="0.6" />
<polyline points="250.0,295.5 276.9,312.9" fill="none" stroke="#6d6d6d" stroke-width="0.5" />
<polygon points="230.4,314.2 276.9,344.2 276.9,350.2 230.4,320.2" fill="#9a9a9a" fill-opacity="0.38"/>
<polygon points="230.4,320.2 276.9,350.2 276.9,358.8 230.4,328.8" fill="url(#noise)" />
<polyline points="230.4,329.4 276.9,359.4" fill="none" stroke="#a86a34" stroke-width="1.0" />
<polyline points="230.4,315.2 276.9,345.2" fill="none" stroke="#7d7d7d" stroke-width="0.6" />
<polyline points="230.4,311.2 276.9,341.2" fill="none" stroke="#6d6d6d" stroke-width="0.5" />
<polyline points="251.2,308.8 272.4,349.7" fill="none" stroke="#4aa9a6" stroke-width="0.9" />
<polygon points="230.4,342.5 276.9,372.5 276.9,378.5 230.4,348.5" fill="#9a9a9a" fill-opacity="0.38"/>
<polygon points="230.4,348.5 276.9,378.5 276.9,387.1 230.4,357.1" fill="url(#noise)" />
<polyline points="230.4,357.7 276.9,387.7" fill="none" stroke="#a86a34" stroke-width="1.0" />
<polyline points="230.4,343.5 276.9,373.5" fill="none" stroke="#7d7d7d" stroke-width="0.6" />
<polyline points="230.4,339.5 276.9,369.5" fill="none" stroke="#6d6d6d" stroke-width="0.5" />
<polyline points="251.2,337.1 272.4,378.0" fill="none" stroke="#4aa9a6" stroke-width="0.9" />
<polygon points="230.4,370.8 276.9,400.8 276.9,406.8 230.4,376.8" fill="#9a9a9a" fill-opacity="0.38"/>
<polygon points="230.4,376.8 276.9,406.8 276.9,415.4 230.4,385.4" fill="url(#noise)" />
<polyline points="230.4,386.0 276.9,416.0" fill="none" stroke="#a86a34" stroke-width="1.0" />
<polyline points="230.4,371.8 276.9,401.8" fill="none" stroke="#7d7d7d" stroke-width="0.6" />
<polyline points="230.4,367.8 276.9,397.8" fill="none" stroke="#6d6d6d" stroke-width="0.5" />
<polyline points="251.2,365.4 272.4,406.3" fill="none" stroke="#4aa9a6" stroke-width="0.9" />
<polygon points="230.4,399.1 276.9,429.1 276.9,435.1 230.4,405.1" fill="#9a9a9a" fill-opacity="0.38"/>
<polygon points="230.4,405.1 276.9,435.1 276.9,443.7 230.4,413.7" fill="url(#noise)" />
<polyline points="230.4,414.3 276.9,444.3" fill="none" stroke="#a86a34" stroke-width="1.0" />
<polyline points="230.4,400.1 276.9,430.1" fill="none" stroke="#7d7d7d" stroke-width="0.6" />
<polyline points="230.4,396.1 276.9,426.1" fill="none" stroke="#6d6d6d" stroke-width="0.5" />
<polyline points="251.2,393.7 272.4,434.6" fill="none" stroke="#4aa9a6" stroke-width="0.9" />
<polygon points="230.4,427.4 276.9,457.4 276.9,463.4 230.4,433.4" fill="#9a9a9a" fill-opacity="0.38"/>
<polygon points="230.4,433.4 276.9,463.4 276.9,472.0 230.4,442.0" fill="url(#noise)" />
<polyline points="230.4,442.6 276.9,472.6" fill="none" stroke="#a86a34" stroke-width="1.0" />
<polyline points="230.4,428.4 276.9,458.4" fill="none" stroke="#7d7d7d" stroke-width="0.6" />
<polyline points="230.4,424.4 276.9,454.4" fill="none" stroke="#6d6d6d" stroke-width="0.5" />
<polyline points="251.2,422.0 272.4,462.9" fill="none" stroke="#4aa9a6" stroke-width="0.9" />
<polygon points="230.4,455.7 276.9,485.7 276.9,491.7 230.4,461.7" fill="#9a9a9a" fill-opacity="0.38"/>
<polygon points="230.4,461.7 276.9,491.7 276.9,500.3 230.4,470.3" fill="url(#noise)" />
<polyline points="230.4,470.9 276.9,500.9" fill="none" stroke="#a86a34" stroke-width="1.0" />
<polyline points="230.4,456.7 276.9,486.7" fill="none" stroke="#7d7d7d" stroke-width="0.6" />
<polyline points="230.4,452.7 276.9,482.7" fill="none" stroke="#6d6d6d" stroke-width="0.5" />
<polyline points="251.2,450.3 272.4,491.2" fill="none" stroke="#4aa9a6" stroke-width="0.9" />
<polygon points="230.4,484.0 276.9,514.0 276.9,520.0 230.4,490.0" fill="#9a9a9a" fill-opacity="0.38"/>
<polygon points="230.4,490.0 276.9,520.0 276.9,528.6 230.4,498.6" fill="url(#noise)" />
<polyline points="230.4,499.2 276.9,529.2" fill="none" stroke="#a86a34" stroke-width="1.0" />
<polyline points="230.4,485.0 276.9,515.0" fill="none" stroke="#7d7d7d" stroke-width="0.6" />
<polyline points="230.4,481.0 276.9,511.0" fill="none" stroke="#6d6d6d" stroke-width="0.5" />
<polyline points="251.2,478.6 272.4,519.5" fill="none" stroke="#4aa9a6" stroke-width="0.9" />
<polygon points="230.4,512.3 276.9,542.3 276.9,548.3 230.4,518.3" fill="#9a9a9a" fill-opacity="0.38"/>
<polygon points="230.4,518.3 276.9,548.3 276.9,556.9 230.4,526.9" fill="url(#noise)" />
<polyline points="230.4,527.5 276.9,557.5" fill="none" stroke="#a86a34" stroke-width="1.0" />
<polyline points="230.4,513.3 276.9,543.3" fill="none" stroke="#7d7d7d" stroke-width="0.6" />
<polyline points="230.4,509.3 276.9,539.3" fill="none" stroke="#6d6d6d" stroke-width="0.5" />
<polyline points="251.2,506.9 272.4,547.8" fill="none" stroke="#4aa9a6" stroke-width="0.9" />
<polygon points="230.4,540.6 276.9,570.6 276.9,576.6 230.4,546.6" fill="#9a9a9a" fill-opacity="0.38"/>
<polygon points="230.4,546.6 276.9,576.6 276.9,585.2 230.4,555.2" fill="url(#noise)" />
<polyline points="230.4,555.8 276.9,585.8" fill="none" stroke="#a86a34" stroke-width="1.0" />
<polyline points="230.4,541.6 276.9,571.6" fill="none" stroke="#7d7d7d" stroke-width="0.6" />
<polyline points="230.4,537.6 276.9,567.6" fill="none" stroke="#6d6d6d" stroke-width="0.5" />
<polyline points="251.2,535.2 272.4,576.1" fill="none" stroke="#4aa9a6" stroke-width="0.9" />
<polygon points="230.4,568.9 276.9,598.9 276.9,604.9 230.4,574.9" fill="#9a9a9a" fill-opacity="0.38"/>
<polygon points="230.4,574.9 276.9,604.9 276.9,613.5 230.4,583.5" fill="url(#noise)" />
<polyline points="230.4,584.1 276.9,614.1" fill="none" stroke="#a86a34" stroke-width="1.0" />
<polyline points="230.4,569.9 276.9,599.9" fill="none" stroke="#7d7d7d" stroke-width="0.6" />
<polyline points="230.4,565.9 276.9,595.9" fill="none" stroke="#6d6d6d" stroke-width="0.5" />
<polyline points="251.2,563.5 272.4,604.4" fill="none" stroke="#4aa9a6" stroke-width="0.9" />
<polygon points="276.9,315.2 322.5,293.9 322.5,299.9 276.9,321.2" fill="#9a9a9a" fill-opacity="0.38"/>
<polygon points="276.9,321.2 322.5,299.9 322.5,308.5 276.9,329.8" fill="url(#noise)" />
<polyline points="276.9,330.4 322.5,309.1" fill="none" stroke="#a86a34" stroke-width="1.0" />
<polyline points="276.9,316.2 322.5,294.9" fill="none" stroke="#7d7d7d" stroke-width="0.6" />
<polyline points="276.9,312.2 322.5,290.9" fill="none" stroke="#6d6d6d" stroke-width="0.5" />
<polygon points="292.4,311.9 316.9,300.4 316.9,304.0 292.4,315.5" fill="#aa1018" />
<polygon points="309.9,300.8 314.9,293.8 319.4,294.8 316.9,301.3" fill="#aa1018" />
<polyline points="278.9,317.5 289.9,311.5" fill="none" stroke="#b46c2c" stroke-width="1.0" />
<polyline points="278.9,320.5 289.9,314.5" fill="none" stroke="#b46c2c" stroke-width="1.0" />
<polyline points="278.9,323.5 289.9,317.5" fill="none" stroke="#b46c2c" stroke-width="1.0" />
<polygon points="276.9,343.5 322.5,322.2 322.5,328.2 276.9,349.5" fill="#9a9a9a" fill-opacity="0.38"/>
<polygon points="276.9,349.5 322.5,328.2 322.5,336.8 276.9,358.1" fill="url(#noise)" />
<polyline points="276.9,358.7 322.5,337.4" fill="none" stroke="#a86a34" stroke-width="1.0" />
<polyline points="276.9,344.5 322.5,323.2" fill="none" stroke="#7d7d7d" stroke-width="0.6" />
<polyline points="276.9,340.5 322.5,319.2" fill="none" stroke="#6d6d6d" stroke-width="0.5" />
<polygon points="292.4,340.2 316.9,328.7 316.9,332.3 292.4,343.8" fill="#aa1018" />
<polyline points="278.9,345.8 289.9,339.8" fill="none" stroke="#b46c2c" stroke-width="1.0" />
<polyline points="278.9,348.8 289.9,342.8" fill="none" stroke="#b46c2c" stroke-width="1.0" />
<polyline points="278.9,351.8 289.9,345.8" fill="none" stroke="#b46c2c" stroke-width="1.0" />
<polygon points="276.9,371.8 322.5,350.5 322.5,356.5 276.9,377.8" fill="#9a9a9a" fill-opacity="0.38"/>
<polygon points="276.9,377.8 322.5,356.5 322.5,365.1 276.9,386.4" fill="url(#noise)" />
<polyline points="276.9,387.0 322.5,365.7" fill="none" stroke="#a86a34" stroke-width="1.0" />
<polyline points="276.9,372.8 322.5,351.5" fill="none" stroke="#7d7d7d" stroke-width="0.6" />
<polyline points="276.9,368.8 322.5,347.5" fill="none" stroke="#6d6d6d" stroke-width="0.5" />
<polygon points="292.4,368.5 316.9,357.0 316.9,360.6 292.4,372.1" fill="#aa1018" />
<polygon points="309.9,357.4 314.9,350.4 319.4,351.4 316.9,357.9" fill="#aa1018" />
<polyline points="278.9,374.1 289.9,368.1" fill="none" stroke="#b46c2c" stroke-width="1.0" />
<polyline points="278.9,377.1 289.9,371.1" fill="none" stroke="#b46c2c" stroke-width="1.0" />
<polyline points="278.9,380.1 289.9,374.1" fill="none" stroke="#b46c2c" stroke-width="1.0" />
<polygon points="276.9,400.1 322.5,378.8 322.5,384.8 276.9,406.1" fill="#9a9a9a" fill-opacity="0.38"/>
<polygon points="276.9,406.1 322.5,384.8 322.5,393.4 276.9,414.7" fill="url(#noise)" />
<polyline points="276.9,415.3 322.5,394.0" fill="none" stroke="#a86a34" stroke-width="1.0" />
<polyline points="276.9,401.1 322.5,379.8" fill="none" stroke="#7d7d7d" stroke-width="0.6" />
<polyline points="276.9,397.1 322.5,375.8" fill="none" stroke="#6d6d6d" stroke-width="0.5" />
<polygon points="292.4,396.8 316.9,385.3 316.9,388.9 292.4,400.4" fill="#aa1018" />
<polyline points="278.9,402.4 289.9,396.4" fill="none" stroke="#b46c2c" stroke-width="1.0" />
<polyline points="278.9,405.4 289.9,399.4" fill="none" stroke="#b46c2c" stroke-width="1.0" />
<polyline points="278.9,408.4 289.9,402.4" fill="none" stroke="#b46c2c" stroke-width="1.0" />
<polygon points="276.9,428.4 322.5,407.1 322.5,413.1 276.9,434.4" fill="#9a9a9a" fill-opacity="0.38"/>
<polygon points="276.9,434.4 322.5,413.1 322.5,421.7 276.9,443.0" fill="url(#noise)" />
<polyline points="276.9,443.6 322.5,422.3" fill="none" stroke="#a86a34" stroke-width="1.0" />
<polyline points="276.9,429.4 322.5,408.1" fill="none" stroke="#7d7d7d" stroke-width="0.6" />
<polyline points="276.9,425.4 322.5,404.1" fill="none" stroke="#6d6d6d" stroke-width="0.5" />
<polygon points="292.4,425.1 316.9,413.6 316.9,417.2 292.4,428.7" fill="#aa1018" />
<polygon points="309.9,414.0 314.9,407.0 319.4,408.0 316.9,414.5" fill="#aa1018" />
<polyline points="278.9,430.7 289.9,424.7" fill="none" stroke="#b46c2c" stroke-width="1.0" />
<polyline points="278.9,433.7 289.9,427.7" fill="none" stroke="#b46c2c" stroke-width="1.0" />
<polyline points="278.9,436.7 289.9,430.7" fill="none" stroke="#b46c2c" stroke-width="1.0" />
<polygon points="276.9,456.7 322.5,435.4 322.5,441.4 276.9,462.7" fill="#9a9a9a" fill-opacity="0.38"/>
<polygon points="276.9,462.7 322.5,441.4 322.5,450.0 276.9,471.3" fill="url(#noise)" />
<polyline points="276.9,471.9 322.5,450.6" fill="none" stroke="#a86a34" stroke-width="1.0" />
<polyline points="276.9,457.7 322.5,436.4" fill="none" stroke="#7d7d7d" stroke-width="0.6" />
<polyline points="276.9,453.7 322.5,432.4" fill="none" stroke="#6d6d6d" stroke-width="0.5" />
<polygon points="292.4,453.4 316.9,441.9 316.9,445.5 292.4,457.0" fill="#aa1018" />
<polyline points="278.9,459.0 289.9,453.0" fill="none" stroke="#b46c2c" stroke-width="1.0" />
<polyline points="278.9,462.0 289.9,456.0" fill="none" stroke="#b46c2c" stroke-width="1.0" />
<polyline points="278.9,465.0 289.9,459.0" fill="none" stroke="#b46c2c" stroke-width="1.0" />
<polygon points="276.9,485.0 322.5,463.7 322.5,469.7 276.9,491.0" fill="#9a9a9a" fill-opacity="0.38"/>
<polygon points="276.9,491.0 322.5,469.7 322.5,478.3 276.9,499.6" fill="url(#noise)" />
<polyline points="276.9,500.2 322.5,478.9" fill="none" stroke="#a86a34" stroke-width="1.0" />
<polyline points="276.9,486.0 322.5,464.7" fill="none" stroke="#7d7d7d" stroke-width="0.6" />
<polyline points="276.9,482.0 322.5,460.7" fill="none" stroke="#6d6d6d" stroke-width="0.5" />
<polygon points="292.4,481.7 316.9,470.2 316.9,473.8 292.4,485.3" fill="#aa1018" />
<polygon points="309.9,470.6 314.9,463.6 319.4,464.6 316.9,471.1" fill="#aa1018" />
<polyline points="278.9,487.3 289.9,481.3" fill="none" stroke="#b46c2c" stroke-width="1.0" />
<polyline points="278.9,490.3 289.9,484.3" fill="none" stroke="#b46c2c" stroke-width="1.0" />
<polyline points="278.9,493.3 289.9,487.3" fill="none" stroke="#b46c2c" stroke-width="1.0" />
<polygon points="276.9,513.3 322.5,492.0 322.5,498.0 276.9,519.3" fill="#9a9a9a" fill-opacity="0.38"/>
<polygon points="276.9,519.3 322.5,498.0 322.5,506.6 276.9,527.9" fill="url(#noise)" />
<polyline points="276.9,528.5 322.5,507.2" fill="none" stroke="#a86a34" stroke-width="1.0" />
<polyline points="276.9,514.3 322.5,493.0" fill="none" stroke="#7d7d7d" stroke-width="0.6" />
<polyline points="276.9,510.3 322.5,489.0" fill="none" stroke="#6d6d6d" stroke-width="0.5" />
<polygon points="292.4,510.0 316.9,498.5 316.9,502.1 292.4,513.6" fill="#aa1018" />
<polyline points="278.9,515.6 289.9,509.6" fill="none" stroke="#b46c2c" stroke-width="1.0" />
<polyline points="278.9,518.6 289.9,512.6" fill="none" stroke="#b46c2c" stroke-width="1.0" />
<polyline points="278.9,521.6 289.9,515.6" fill="none" stroke="#b46c2c" stroke-width="1.0" />
<polygon points="276.9,541.6 322.5,520.3 322.5,526.3 276.9,547.6" fill="#9a9a9a" fill-opacity="0.38"/>
<polygon points="276.9,547.6 322.5,526.3 322.5,534.9 276.9,556.2" fill="url(#noise)" />
<polyline points="276.9,556.8 322.5,535.5" fill="none" stroke="#a86a34" stroke-width="1.0" />
<polyline points="276.9,542.6 322.5,521.3" fill="none" stroke="#7d7d7d" stroke-width="0.6" />
<polyline points="276.9,538.6 322.5,517.3" fill="none" stroke="#6d6d6d" stroke-width="0.5" />
<polygon points="292.4,538.3 316.9,526.8 316.9,530.4 292.4,541.9" fill="#aa1018" />
<polygon points="309.9,527.2 314.9,520.2 319.4,521.2 316.9,527.7" fill="#aa1018" />
<polyline points="278.9,543.9 289.9,537.9" fill="none" stroke="#b46c2c" stroke-width="1.0" />
<polyline points="278.9,546.9 289.9,540.9" fill="none" stroke="#b46c2c" stroke-width="1.0" />
<polyline points="278.9,549.9 289.9,543.9" fill="none" stroke="#b46c2c" stroke-width="1.0" />
<polygon points="276.9,569.9 322.5,548.6 322.5,554.6 276.9,575.9" fill="#9a9a9a" fill-opacity="0.38"/>
<polygon points="276.9,575.9 322.5,554.6 322.5,563.2 276.9,584.5" fill="url(#noise)" />
<polyline points="276.9,585.1 322.5,563.8" fill="none" stroke="#a86a34" stroke-width="1.0" />
<polyline points="276.9,570.9 322.5,549.6" fill="none" stroke="#7d7d7d" stroke-width="0.6" />
<polyline points="276.9,566.9 322.5,545.6" fill="none" stroke="#6d6d6d" stroke-width="0.5" />
<polygon points="292.4,566.6 316.9,555.1 316.9,558.7 292.4,570.2" fill="#aa1018" />
<polyline points="278.9,572.2 289.9,566.2" fill="none" stroke="#b46c2c" stroke-width="1.0" />
<polyline points="278.9,575.2 289.9,569.2" fill="none" stroke="#b46c2c" stroke-width="1.0" />
<polyline points="278.9,578.2 289.9,572.2" fill="none" stroke="#b46c2c" stroke-width="1.0" />
<polygon points="276.9,598.2 322.5,576.9 322.5,582.9 276.9,604.2" fill="#9a9a9a" fill-opacity="0.38"/>
<polygon points="276.9,604.2 322.5,582.9 322.5,591.5 276.9,612.8" fill="url(#noise)" />
<polyline points="276.9,613.4 322.5,592.1" fill="none" stroke="#a86a34" stroke-width="1.0" />
<polyline points="276.9,599.2 322.5,577.9" fill="none" stroke="#7d7d7d" stroke-width="0.6" />
<polyline points="276.9,595.2 322.5,573.9" fill="none" stroke="#6d6d6d" stroke-width="0.5" />
<polygon points="292.4,594.9 316.9,583.4 316.9,587.0 292.4,598.5" fill="#aa1018" />
<polygon points="309.9,583.8 314.9,576.8 319.4,577.8 316.9,584.3" fill="#aa1018" />
<polyline points="278.9,600.5 289.9,594.5" fill="none" stroke="#b46c2c" stroke-width="1.0" />
<polyline points="278.9,603.5 289.9,597.5" fill="none" stroke="#b46c2c" stroke-width="1.0" />
<polyline points="278.9,606.5 289.9,600.5" fill="none" stroke="#b46c2c" stroke-width="1.0" />
<polygon points="322.5,279.7 341.5,288.7 341.5,294.7 322.5,285.7" fill="#9a9a9a" fill-opacity="0.38"/>
<polygon points="322.5,285.7 341.5,294.7 341.5,303.3 322.5,294.3" fill="url(#noise)" />
<polyline points="322.5,294.9 341.5,303.9" fill="none" stroke="#a86a34" stroke-width="1.0" />
<polyline points="322.5,280.7 341.5,289.7" fill="none" stroke="#7d7d7d" stroke-width="0.6" />
<polyline points="322.5,276.7 341.5,285.7" fill="none" stroke="#6d6d6d" stroke-width="0.5" />
<polygon points="322.5,308.0 341.5,317.0 341.5,323.0 322.5,314.0" fill="#9a9a9a" fill-opacity="0.38"/>
<polygon points="322.5,314.0 341.5,323.0 341.5,331.6 322.5,322.6" fill="url(#noise)" />
<polyline points="322.5,323.2 341.5,332.2" fill="none" stroke="#a86a34" stroke-width="1.0" />
<polyline points="322.5,309.0 341.5,318.0" fill="none" stroke="#7d7d7d" stroke-width="0.6" />
<polyline points="322.5,305.0 341.5,314.0" fill="none" stroke="#6d6d6d" stroke-width="0.5" />
<polygon points="322.5,336.3 341.5,345.3 341.5,351.3 322.5,342.3" fill="#9a9a9a" fill-opacity="0.38"/>
<polygon points="322.5,342.3 341.5,351.3 341.5,359.9 322.5,350.9" fill="url(#noise)" />
<polyline points="322.5,351.5 341.5,360.5" fill="none" stroke="#a86a34" stroke-width="1.0" />
<polyline points="322.5,337.3 341.5,346.3" fill="none" stroke="#7d7d7d" stroke-width="0.6" />
<polyline points="322.5,333.3 341.5,342.3" fill="none" stroke="#6d6d6d" stroke-width="0.5" />
<polygon points="322.5,364.6 341.5,373.6 341.5,379.6 322.5,370.6" fill="#9a9a9a" fill-opacity="0.38"/>
<polygon points="322.5,370.6 341.5,379.6 341.5,388.2 322.5,379.2" fill="url(#noise)" />
<polyline points="322.5,379.8 341.5,388.8" fill="none" stroke="#a86a34" stroke-width="1.0" />
<polyline points="322.5,365.6 341.5,374.6" fill="none" stroke="#7d7d7d" stroke-width="0.6" />
<polyline points="322.5,361.6 341.5,370.6" fill="none" stroke="#6d6d6d" stroke-width="0.5" />
<polygon points="322.5,392.9 341.5,401.9 341.5,407.9 322.5,398.9" fill="#9a9a9a" fill-opacity="0.38"/>
<polygon points="322.5,398.9 341.5,407.9 341.5,416.5 322.5,407.5" fill="url(#noise)" />
<polyline points="322.5,408.1 341.5,417.1" fill="none" stroke="#a86a34" stroke-width="1.0" />
<polyline points="322.5,393.9 341.5,402.9" fill="none" stroke="#7d7d7d" stroke-width="0.6" />
<polyline points="322.5,389.9 341.5,398.9" fill="none" stroke="#6d6d6d" stroke-width="0.5" />
<polygon points="322.5,421.2 341.5,430.2 341.5,436.2 322.5,427.2" fill="#9a9a9a" fill-opacity="0.38"/>
<polygon points="322.5,427.2 341.5,436.2 341.5,444.8 322.5,435.8" fill="url(#noise)" />
<polyline points="322.5,436.4 341.5,445.4" fill="none" stroke="#a86a34" stroke-width="1.0" />
<polyline points="322.5,422.2 341.5,431.2" fill="none" stroke="#7d7d7d" stroke-width="0.6" />
<polyline points="322.5,418.2 341.5,427.2" fill="none" stroke="#6d6d6d" stroke-width="0.5" />
<polygon points="322.5,449.5 341.5,458.5 341.5,464.5 322.5,455.5" fill="#9a9a9a" fill-opacity="0.38"/>
<polygon points="322.5,455.5 341.5,464.5 341.5,473.1 322.5,464.1" fill="url(#noise)" />
<polyline points="322.5,464.7 341.5,473.7" fill="none" stroke="#a86a34" stroke-width="1.0" />
<polyline points="322.5,450.5 341.5,459.5" fill="none" stroke="#7d7d7d" stroke-width="0.6" />
<polyline points="322.5,446.5 341.5,455.5" fill="none" stroke="#6d6d6d" stroke-width="0.5" />
<polygon points="322.5,477.8 341.5,486.8 341.5,492.8 322.5,483.8" fill="#9a9a9a" fill-opacity="0.38"/>
<polygon points="322.5,483.8 341.5,492.8 341.5,501.4 322.5,492.4" fill="url(#noise)" />
<polyline points="322.5,493.0 341.5,502.0" fill="none" stroke="#a86a34" stroke-width="1.0" />
<polyline points="322.5,478.8 341.5,487.8" fill="none" stroke="#7d7d7d" stroke-width="0.6" />
<polyline points="322.5,474.8 341.5,483.8" fill="none" stroke="#6d6d6d" stroke-width="0.5" />
<polygon points="322.5,506.1 341.5,515.1 341.5,521.1 322.5,512.1" fill="#9a9a9a" fill-opacity="0.38"/>
<polygon points="322.5,512.1 341.5,521.1 341.5,529.7 322.5,520.7" fill="url(#noise)" />
<polyline points="322.5,521.3 341.5,530.3" fill="none" stroke="#a86a34" stroke-width="1.0" />
<polyline points="322.5,507.1 341.5,516.1" fill="none" stroke="#7d7d7d" stroke-width="0.6" />
<polyline points="322.5,503.1 341.5,512.1" fill="none" stroke="#6d6d6d" stroke-width="0.5" />
<polygon points="322.5,534.4 341.5,543.4 341.5,549.4 322.5,540.4" fill="#9a9a9a" fill-opacity="0.38"/>
<polygon points="322.5,540.4 341.5,549.4 341.5,558.0 322.5,549.0" fill="url(#noise)" />
<polyline points="322.5,549.6 341.5,558.6" fill="none" stroke="#a86a34" stroke-width="1.0" />
<polyline points="322.5,535.4 341.5,544.4" fill="none" stroke="#7d7d7d" stroke-width="0.6" />
<polyline points="322.5,531.4 341.5,540.4" fill="none" stroke="#6d6d6d" stroke-width="0.5" />
<polygon points="322.5,562.7 341.5,571.7 341.5,577.7 322.5,568.7" fill="#9a9a9a" fill-opacity="0.38"/>
<polygon points="322.5,568.7 341.5,577.7 341.5,586.3 322.5,577.3" fill="url(#noise)" />
<polyline points="322.5,577.9 341.5,586.9" fill="none" stroke="#a86a34" stroke-width="1.0" />
<polyline points="322.5,563.7 341.5,572.7" fill="none" stroke="#7d7d7d" stroke-width="0.6" />
<polyline points="322.5,559.7 341.5,568.7" fill="none" stroke="#6d6d6d" stroke-width="0.5" />
<polygon points="341.5,288.7 395.0,260.9 395.0,266.9 341.5,294.7" fill="#9a9a9a" fill-opacity="0.38"/>
<polygon points="341.5,294.7 395.0,266.9 395.0,275.5 341.5,303.3" fill="url(#noise)" />
<polyline points="341.5,303.9 395.0,276.1" fill="none" stroke="#a86a34" stroke-width="1.0" />
<polyline points="341.5,289.7 395.0,261.9" fill="none" stroke="#7d7d7d" stroke-width="0.6" />
<polyline points="341.5,285.7 395.0,257.9" fill="none" stroke="#6d6d6d" stroke-width="0.5" />
<polyline points="343.5,289.0 354.5,283.0" fill="none" stroke="#b46c2c" stroke-width="1.0" />
<polyline points="343.5,292.0 354.5,286.0" fill="none" stroke="#b46c2c" stroke-width="1.0" />
<polyline points="343.5,295.0 354.5,289.0" fill="none" stroke="#b46c2c" stroke-width="1.0" />
<polygon points="341.5,317.0 395.0,289.2 395.0,295.2 341.5,323.0" fill="#9a9a9a" fill-opacity="0.38"/>
<polygon points="341.5,323.0 395.0,295.2 395.0,303.8 341.5,331.6" fill="url(#noise)" />
<polyline points="341.5,332.2 395.0,304.4" fill="none" stroke="#a86a34" stroke-width="1.0" />
<polyline points="341.5,318.0 395.0,290.2" fill="none" stroke="#7d7d7d" stroke-width="0.6" />
<polyline points="341.5,314.0 395.0,286.2" fill="none" stroke="#6d6d6d" stroke-width="0.5" />
<polyline points="343.5,317.3 354.5,311.3" fill="none" stroke="#b46c2c" stroke-width="1.0" />
<polyline points="343.5,320.3 354.5,314.3" fill="none" stroke="#b46c2c" stroke-width="1.0" />
<polyline points="343.5,323.3 354.5,317.3" fill="none" stroke="#b46c2c" stroke-width="1.0" />
<polyline points="386.5,276.8 362.5,316.8" fill="none" stroke="#4aa9a6" stroke-width="0.9" />
<polygon points="341.5,345.3 395.0,317.5 395.0,323.5 341.5,351.3" fill="#9a9a9a" fill-opacity="0.38"/>
<polygon points="341.5,351.3 395.0,323.5 395.0,332.1 341.5,359.9" fill="url(#noise)" />
<polyline points="341.5,360.5 395.0,332.7" fill="none" stroke="#a86a34" stroke-width="1.0" />
<polyline points="341.5,346.3 395.0,318.5" fill="none" stroke="#7d7d7d" stroke-width="0.6" />
<polyline points="341.5,342.3 395.0,314.5" fill="none" stroke="#6d6d6d" stroke-width="0.5" />
<polyline points="343.5,345.6 354.5,339.6" fill="none" stroke="#b46c2c" stroke-width="1.0" />
<polyline points="343.5,348.6 354.5,342.6" fill="none" stroke="#b46c2c" stroke-width="1.0" />
<polyline points="343.5,351.6 354.5,345.6" fill="none" stroke="#b46c2c" stroke-width="1.0" />
<polyline points="386.5,305.1 362.5,345.1" fill="none" stroke="#4aa9a6" stroke-width="0.9" />
<polygon points="341.5,373.6 395.0,345.8 395.0,351.8 341.5,379.6" fill="#9a9a9a" fill-opacity="0.38"/>
<polygon points="341.5,379.6 395.0,351.8 395.0,360.4 341.5,388.2" fill="url(#noise)" />
<polyline points="341.5,388.8 395.0,361.0" fill="none" stroke="#a86a34" stroke-width="1.0" />
<polyline points="341.5,374.6 395.0,346.8" fill="none" stroke="#7d7d7d" stroke-width="0.6" />
<polyline points="341.5,370.6 395.0,342.8" fill="none" stroke="#6d6d6d" stroke-width="0.5" />
<polyline points="343.5,373.9 354.5,367.9" fill="none" stroke="#b46c2c" stroke-width="1.0" />
<polyline points="343.5,376.9 354.5,370.9" fill="none" stroke="#b46c2c" stroke-width="1.0" />
<polyline points="343.5,379.9 354.5,373.9" fill="none" stroke="#b46c2c" stroke-width="1.0" />
<polyline points="386.5,333.4 362.5,373.4" fill="none" stroke="#4aa9a6" stroke-width="0.9" />
<polygon points="341.5,401.9 395.0,374.1 395.0,380.1 341.5,407.9" fill="#9a9a9a" fill-opacity="0.38"/>
<polygon points="341.5,407.9 395.0,380.1 395.0,388.7 341.5,416.5" fill="url(#noise)" />
<polyline points="341.5,417.1 395.0,389.3" fill="none" stroke="#a86a34" stroke-width="1.0" />
<polyline points="341.5,402.9 395.0,375.1" fill="none" stroke="#7d7d7d" stroke-width="0.6" />
<polyline points="341.5,398.9 395.0,371.1" fill="none" stroke="#6d6d6d" stroke-width="0.5" />
<polyline points="343.5,402.2 354.5,396.2" fill="none" stroke="#b46c2c" stroke-width="1.0" />
<polyline points="343.5,405.2 354.5,399.2" fill="none" stroke="#b46c2c" stroke-width="1.0" />
<polyline points="343.5,408.2 354.5,402.2" fill="none" stroke="#b46c2c" stroke-width="1.0" />
<polyline points="386.5,361.7 362.5,401.7" fill="none" stroke="#4aa9a6" stroke-width="0.9" />
<polygon points="341.5,430.2 395.0,402.4 395.0,408.4 341.5,436.2" fill="#9a9a9a" fill-opacity="0.38"/>
<polygon points="341.5,436.2 395.0,408.4 395.0,417.0 341.5,444.8" fill="url(#noise)" />
<polyline points="341.5,445.4 395.0,417.6" fill="none" stroke="#a86a34" stroke-width="1.0" />
<polyline points="341.5,431.2 395.0,403.4" fill="none" stroke="#7d7d7d" stroke-width="0.6" />
<polyline points="341.5,427.2 395.0,399.4" fill="none" stroke="#6d6d6d" stroke-width="0.5" />
<polyline points="343.5,430.5 354.5,424.5" fill="none" stroke="#b46c2c" stroke-width="1.0" />
<polyline points="343.5,433.5 354.5,427.5" fill="none" stroke="#b46c2c" stroke-width="1.0" />
<polyline points="343.5,436.5 354.5,430.5" fill="none" stroke="#b46c2c" stroke-width="1.0" />
<polyline points="386.5,390.0 362.5,430.0" fill="none" stroke="#4aa9a6" stroke-width="0.9" />
<polygon points="341.5,458.5 395.0,430.7 395.0,436.7 341.5,464.5" fill="#9a9a9a" fill-opacity="0.38"/>
<polygon points="341.5,464.5 395.0,436.7 395.0,445.3 341.5,473.1" fill="url(#noise)" />
<polyline points="341.5,473.7 395.0,445.9" fill="none" stroke="#a86a34" stroke-width="1.0" />
<polyline points="341.5,459.5 395.0,431.7" fill="none" stroke="#7d7d7d" stroke-width="0.6" />
<polyline points="341.5,455.5 395.0,427.7" fill="none" stroke="#6d6d6d" stroke-width="0.5" />
<polyline points="343.5,458.8 354.5,452.8" fill="none" stroke="#b46c2c" stroke-width="1.0" />
<polyline points="343.5,461.8 354.5,455.8" fill="none" stroke="#b46c2c" stroke-width="1.0" />
<polyline points="343.5,464.8 354.5,458.8" fill="none" stroke="#b46c2c" stroke-width="1.0" />
<polyline points="386.5,418.3 362.5,458.3" fill="none" stroke="#4aa9a6" stroke-width="0.9" />
<polygon points="341.5,486.8 395.0,459.0 395.0,465.0 341.5,492.8" fill="#9a9a9a" fill-opacity="0.38"/>
<polygon points="341.5,492.8 395.0,465.0 395.0,473.6 341.5,501.4" fill="url(#noise)" />
<polyline points="341.5,502.0 395.0,474.2" fill="none" stroke="#a86a34" stroke-width="1.0" />
<polyline points="341.5,487.8 395.0,460.0" fill="none" stroke="#7d7d7d" stroke-width="0.6" />
<polyline points="341.5,483.8 395.0,456.0" fill="none" stroke="#6d6d6d" stroke-width="0.5" />
<polyline points="343.5,487.1 354.5,481.1" fill="none" stroke="#b46c2c" stroke-width="1.0" />
<polyline points="343.5,490.1 354.5,484.1" fill="none" stroke="#b46c2c" stroke-width="1.0" />
<polyline points="343.5,493.1 354.5,487.1" fill="none" stroke="#b46c2c" stroke-width="1.0" />
<polyline points="386.5,446.6 362.5,486.6" fill="none" stroke="#4aa9a6" stroke-width="0.9" />
<polygon points="341.5,515.1 395.0,487.3 395.0,493.3 341.5,521.1" fill="#9a9a9a" fill-opacity="0.38"/>
<polygon points="341.5,521.1 395.0,493.3 395.0,501.9 341.5,529.7" fill="url(#noise)" />
<polyline points="341.5,530.3 395.0,502.5" fill="none" stroke="#a86a34" stroke-width="1.0" />
<polyline points="341.5,516.1 395.0,488.3" fill="none" stroke="#7d7d7d" stroke-width="0.6" />
<polyline points="341.5,512.1 395.0,484.3" fill="none" stroke="#6d6d6d" stroke-width="0.5" />
<polyline points="343.5,515.4 354.5,509.4" fill="none" stroke="#b46c2c" stroke-width="1.0" />
<polyline points="343.5,518.4 354.5,512.4" fill="none" stroke="#b46c2c" stroke-width="1.0" />
<polyline points="343.5,521.4 354.5,515.4" fill="none" stroke="#b46c2c" stroke-width="1.0" />
<polyline points="386.5,474.9 362.5,514.9" fill="none" stroke="#4aa9a6" stroke-width="0.9" />
<polygon points="341.5,543.4 395.0,515.6 395.0,521.6 341.5,549.4" fill="#9a9a9a" fill-opacity="0.38"/>
<polygon points="341.5,549.4 395.0,521.6 395.0,530.2 341.5,558.0" fill="url(#noise)" />
<polyline points="341.5,558.6 395.0,530.8" fill="none" stroke="#a86a34" stroke-width="1.0" />
<polyline points="341.5,544.4 395.0,516.6" fill="none" stroke="#7d7d7d" stroke-width="0.6" />
<polyline points="341.5,540.4 395.0,512.6" fill="none" stroke="#6d6d6d" stroke-width="0.5" />
<polyline points="343.5,543.7 354.5,537.7" fill="none" stroke="#b46c2c" stroke-width="1.0" />
<polyline points="343.5,546.7 354.5,540.7" fill="none" stroke="#b46c2c" stroke-width="1.0" />
<polyline points="343.5,549.7 354.5,543.7" fill="none" stroke="#b46c2c" stroke-width="1.0" />
<polyline points="386.5,503.2 362.5,543.2" fill="none" stroke="#4aa9a6" stroke-width="0.9" />
<polyline points="187.6,636.0 203.0,644.0 236.0,632.0" fill="none" stroke="#7d7d7d" stroke-width="0.7" />
<polyline points="236.0,640.0 255.0,648.0 277.0,645.0" fill="none" stroke="#7d7d7d" stroke-width="0.7" />
<polyline points="277.0,645.0 290.0,640.0 283.0,636.0" fill="none" stroke="#7d7d7d" stroke-width="0.7" />
<polyline points="277.0,645.0 322.5,622.0" fill="none" stroke="#7d7d7d" stroke-width="0.7" />
<polyline points="322.5,622.0 347.0,618.0 341.5,628.0" fill="none" stroke="#7d7d7d" stroke-width="0.7" />
<polygon points="185.1,637.5 187.6,635.0 190.1,637.5 187.6,639.0" fill="#8d8875" />
<polygon points="200.5,645.5 203.0,643.0 205.5,645.5 203.0,647.0" fill="#8d8875" />
<polygon points="233.5,641.5 236.0,639.0 238.5,641.5 236.0,643.0" fill="#8d8875" />
<polygon points="252.5,649.5 255.0,647.0 257.5,649.5 255.0,651.0" fill="#8d8875" />
<polygon points="274.5,646.5 277.0,644.0 279.5,646.5 277.0,648.0" fill="#8d8875" />
<polygon points="280.5,641.5 283.0,639.0 285.5,641.5 283.0,643.0" fill="#8d8875" />
<polygon points="320.0,623.5 322.5,621.0 325.0,623.5 322.5,625.0" fill="#8d8875" />
<polygon points="339.0,629.5 341.5,627.0 344.0,629.5 341.5,631.0" fill="#8d8875" />
<polygon points="344.5,621.5 347.0,619.0 349.5,621.5 347.0,623.0" fill="#8d8875" />
<polygon points="287.5,641.5 290.0,639.0 292.5,641.5 290.0,643.0" fill="#8d8875" />
<path fill-rule="evenodd" fill="#4e5154" d="M1138 88.5 a49 28.5 0 1 0 98 0 a49 28.5 0 1 0 -98 0 Z M1148.3 86.85 a38.7 22.85 0 1 0 77.4 0 a38.7 22.85 0 1 0 -77.4 0 Z"/>
<polygon points="1175.3,59.2 1180.4,56.3 1190.7,55.6 1191.4,59.2 1200.2,72.4 1200.2,88.5 1192.9,91.4 1191.4,85.6 1187.7,87.7 1183.4,92.9 1181.2,87.7 1175.3,89.9 1173.9,72.4" fill="#57595c" />
<polygon points="1181.2,72.4 1186.3,68.3 1192.9,70.2 1193.6,76.0 1187.7,80.4 1181.9,77.5" fill="#40538a" />
<polyline points="1163.3,88.5 1187.7,79.0 1211.1,88.5" fill="none" stroke="#63666a" stroke-width="0.7" />
<polyline points="1187.7,46.8 1187.7,79.0" fill="none" stroke="#63666a" stroke-width="0.7" />
<polyline points="1187.7,46.8 1211.1,60.7 1211.1,88.5 1187.7,102.4 1163.3,88.5 1163.3,60.7 1187.7,46.8" fill="none" stroke="#85888c" stroke-width="0.9" />
<polyline points="1163.3,60.7 1187.7,73.9 1211.1,60.7" fill="none" stroke="#85888c" stroke-width="0.9" />
<polyline points="1187.7,73.9 1187.7,102.4" fill="none" stroke="#85888c" stroke-width="0.9" />
</svg>
<div class="topbar"></div>

<div class="con"><div class="gr"></div><div class="tx">Classify entities as
[Wall/Column/Slab/Beam/wIndow/Door/sPace/bui
Lding/sTory/building
Element/Xref/Other/Auto/stRuctural/Unclassif</div><svg class="tri" width="8" height="4" viewBox="0 0 8 4"><path d="M0 4 L4 0 L8 4 Z" fill="#f2f2f2"/></svg></div>

<div class="dlg">
 <div class="ttl"><span>Classify As Bim Element</span>
  <svg class="close" width="9.4" height="9.4" viewBox="0 0 10 10"><path d="M0.7 0.7 L9.3 9.3 M9.3 0.7 L0.7 9.3" stroke="#222" stroke-width="1.1" fill="none"/></svg>
 </div>
 <div class="lbl">Browse through classification types</div>
 <div class="search"><svg width="10" height="10" viewBox="0 0 10 10"><circle cx="4" cy="4" r="2.8" fill="none" stroke="#505050" stroke-width="1.05"/><path d="M6.1 6.1 L8.8 8.8" stroke="#505050" stroke-width="1.3"/></svg><span>Search...</span></div>
 <div class="tree">
  <i class="v1"></i><i class="v2"></i>
<div class="row" style="top:0.90px"><span class="cv "><svg class="chv" width="6" height="8" viewBox="0 0 6 8"><path d="M1 0.8 L4.4 4 L1 7.2" fill="none" stroke="#8a8a8a" stroke-width="1.1"/></svg></span><i class="dot"></i><span class="t0" style="letter-spacing:-0.420px">HVAC Elements</span></div>
<div class="row" style="top:14.33px"><span class="cv "><svg class="chv" width="6" height="8" viewBox="0 0 6 8"><path d="M1 0.8 L4.4 4 L1 7.2" fill="none" stroke="#8a8a8a" stroke-width="1.1"/></svg></span><i class="dot"></i><span class="t0" style="letter-spacing:-0.255px">Plumbing & Fire Protection Elements</span></div>
<div class="row" style="top:27.76px"><span class="cv "><svg class="chv" width="6" height="8" viewBox="0 0 6 8"><path d="M1 0.8 L4.4 4 L1 7.2" fill="none" stroke="#8a8a8a" stroke-width="1.1"/></svg></span><i class="dot"></i><span class="t0" style="letter-spacing:-0.180px">Spatial Structure Elements</span></div>
<div class="row" style="top:41.19px"><span class="cv ex"><svg class="chv" width="8" height="6" viewBox="0 0 8 6"><path d="M0.8 1 L4 4.4 L7.2 1" fill="none" stroke="#222" stroke-width="1.3"/></svg></span><i class="dot"></i><span class="t0" style="letter-spacing:-0.371px">Civil Elements</span></div>
<div class="row" style="top:54.62px"><i class="hl"></i><span class="t1" style="letter-spacing:-0.282px">Alignment</span></div>
<div class="row" style="top:68.05px"><i class="hl"></i><span class="t1" style="letter-spacing:-0.199px">Alignment Cant</span></div>
<div class="row" style="top:81.48px"><i class="hl"></i><span class="t1" style="letter-spacing:-0.206px">Alignment Horizontal</span></div>
<div class="row" style="top:94.91px"><i class="hl"></i><span class="t1" style="letter-spacing:-0.273px">Alignment Segment</span></div>
<div class="row" style="top:108.34px"><i class="hl"></i><span class="t1" style="letter-spacing:-0.409px">Bearing</span></div>
<div class="row" style="top:121.77px"><i class="hl"></i><span class="t1" style="letter-spacing:-0.361px">Borehole</span></div>
<div class="row" style="top:135.20px"><i class="hl"></i><span class="t1" style="letter-spacing:-0.339px">Civil Element</span></div>
<div class="row" style="top:148.63px"><i class="hl"></i><span class="t1" style="letter-spacing:-0.416px">Course</span></div>
<div class="row" style="top:162.06px"><i class="hl"></i><span class="t1" style="letter-spacing:-0.219px">Earthworks Element</span></div>
<div class="row" style="top:175.49px"><i class="hl"></i><span class="t1" style="letter-spacing:-0.241px">Earthworks Fill</span></div>
<div class="row" style="top:188.92px"><i class="hl"></i><span class="t1" style="letter-spacing:-0.311px">Geographic Element</span></div>
<div class="row" style="top:202.35px"><i class="hl"></i><span class="t1" style="letter-spacing:-0.420px">Geomodel</span></div>
<div class="row" style="top:215.78px"><i class="hl"></i><span class="t1" style="letter-spacing:-0.420px">Geoslice</span></div>
<div class="row" style="top:229.21px"><i class="hl"></i><span class="t1" style="letter-spacing:-0.223px">Geotechnical Stratum</span></div>
<div class="row" style="top:242.64px"><i class="hl"></i><span class="t1" style="letter-spacing:-0.420px">Kerb</span></div>
<div class="row" style="top:256.07px"><i class="hl"></i><span class="t1" style="letter-spacing:-0.304px">Linear Element</span></div>
<div class="row" style="top:269.50px"><i class="hl"></i><span class="t1" style="letter-spacing:-0.270px">Liquid Terminal</span></div>
<div class="row" style="top:282.93px"><i class="hl"></i><span class="t1" style="letter-spacing:-0.309px">Mooring Device</span></div>
<div class="row" style="top:296.36px"><i class="hl"></i><span class="t1" style="letter-spacing:-0.209px">Navigation Element</span></div>
<div class="row" style="top:309.79px"><i class="hl"></i><span class="t1" style="letter-spacing:-0.253px">Pavement</span></div>
<div class="row" style="top:323.22px"><i class="hl"></i><span class="t1" style="letter-spacing:-0.420px">Rail</span></div>
<div class="row" style="top:336.65px"><i class="hl"></i><span class="t1" style="letter-spacing:0.000px">Referent</span></div>
<div class="row" style="top:350.08px"><i class="hl"></i><span class="t1" style="letter-spacing:-0.318px">ReinforceSoil</span></div>
<div class="row" style="top:363.51px"><i class="hl"></i><span class="t1" style="letter-spacing:-0.420px">Sign</span></div>
<div class="row" style="top:376.94px"><i class="hl"></i><span class="t1" style="letter-spacing:-0.420px">Signal</span></div>
<div class="row" style="top:390.37px"><i class="hl"></i><span class="t1" style="letter-spacing:-0.309px">Track Element</span></div>
<div class="row" style="top:403.80px"><span class="cv "><svg class="chv" width="6" height="8" viewBox="0 0 6 8"><path d="M1 0.8 L4.4 4 L1 7.2" fill="none" stroke="#8a8a8a" stroke-width="1.1"/></svg></span><i class="dot"></i><span class="t0" style="letter-spacing:-0.361px">Generic Elements</span></div>
  <div class="sbar"><div class="thumb"></div></div>
 </div>
 <div class="chk"></div><div class="chkl">Convert to block and classify the block reference</div>
 <div class="bn">Block name:</div><div class="bni"></div>
 <div class="btn ok">OK</div><div class="btn cancel">Cancel</div>
 <svg class="grip" width="7" height="7" viewBox="0 0 7 7"><g fill="#9a9a9a"><rect x="5" y="1" width="1" height="1"/><rect x="3" y="3" width="1" height="1"/><rect x="5" y="3" width="1" height="1"/><rect x="1" y="5" width="1" height="1"/><rect x="3" y="5" width="1" height="1"/><rect x="5" y="5" width="1" height="1"/></g></svg>
</div>

<svg class="cur" width="1216" height="684" viewBox="0 0 1216 684"><path d="M489.4 323.8 L489.4 354.6 L496.5 347.8 L501.8 358.2 L507.2 355.9 L503.2 346.2 L510 345.4 Z" fill="#fff" stroke="#26262c" stroke-width="1.4" stroke-linejoin="miter"/></svg>
</div>
</body></html>
